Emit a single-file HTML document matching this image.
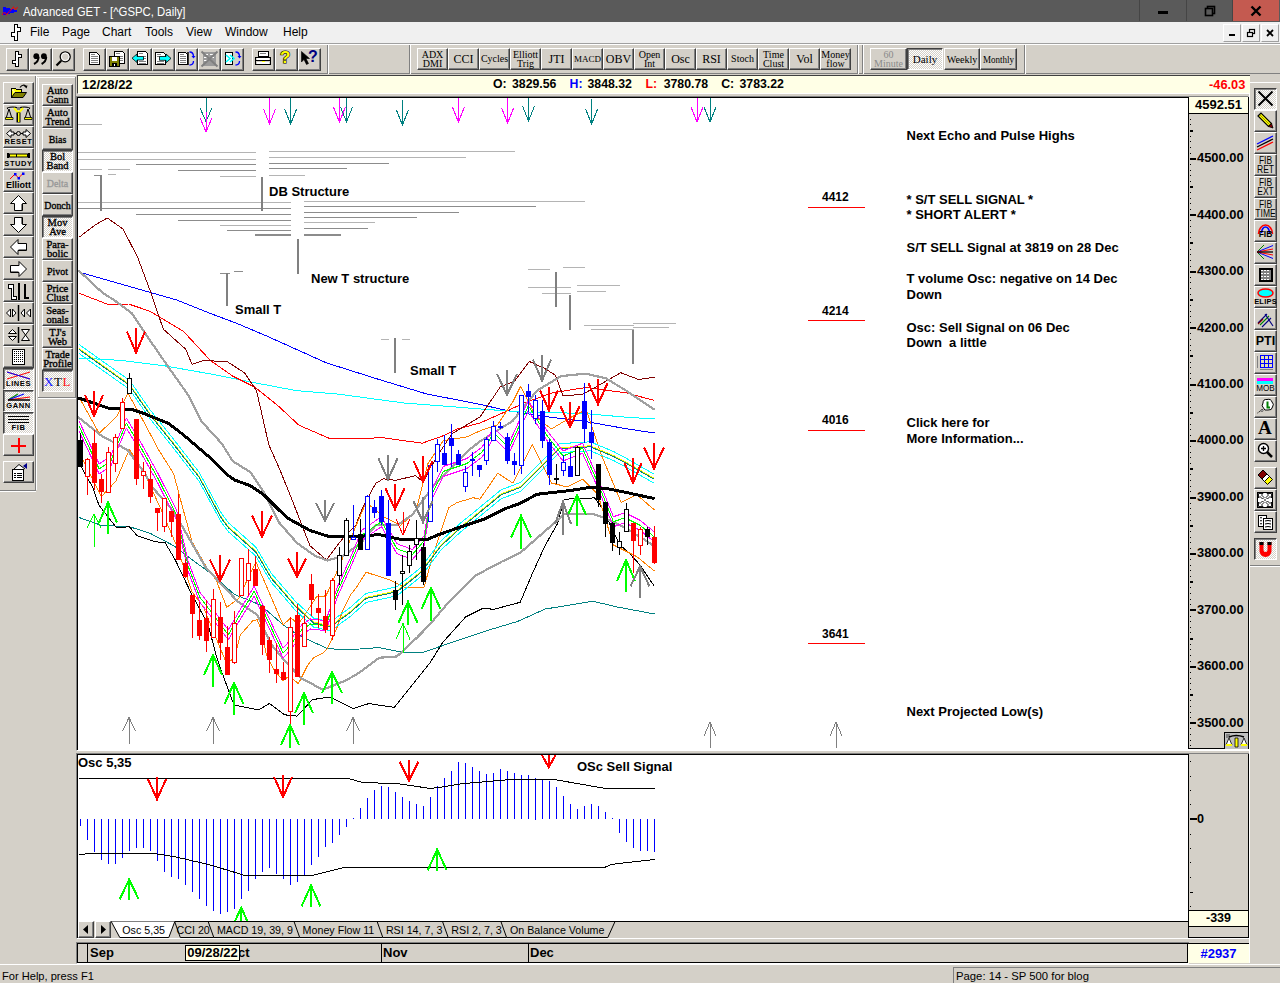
<!DOCTYPE html>
<html><head><meta charset="utf-8"><style>
*{margin:0;padding:0;box-sizing:border-box}
html,body{width:1280px;height:983px;overflow:hidden;background:#d4d0c8;font-family:"Liberation Sans",sans-serif;position:relative}
.a{position:absolute}
.btn{position:absolute;background:#d4d0c8;border:1px solid;border-color:#fff #404040 #404040 #fff;box-shadow:inset -1px -1px #808080}
.dn{border-color:#404040 #fff #fff #404040;box-shadow:inset 1px 1px #808080;background-color:#e8e6e0;background-image:repeating-conic-gradient(#fff 0 25%,#d4d0c8 0 50%);background-size:2px 2px}
.ser{font-family:"Liberation Serif",serif}
.mi{position:absolute;top:4px;font-size:12px}
</style></head><body>
<div class="a" style="left:0;top:0;width:1280px;height:22px;background:#5a5a5a"></div>
<svg class="a" style="left:0px;top:0px" width="20" height="18" viewBox="0 0 20 18"><path d="M3 7 H6 V8 H10 V9 H14 V10 H17 V12 H14 V13 H10 V14 H6 V15 H3 Z" fill="#0000ff"/><path d="M2.3 14.6 L4.5 12.3 L6.5 14.6 L13.5 7.2 L15.5 9.5 L17.6 7.2" stroke="#ff0000" stroke-width="1.3" fill="none" stroke-dasharray="1.2 0.6"/></svg>
<div class="a" style="left:23px;top:4.5px;white-space:nowrap;color:#fff;font-size:12.3px;line-height:14px;transform:scaleX(0.925);transform-origin:0 0">Advanced GET - [^GSPC, Daily]</div>
<div class="a" style="left:1139px;top:0;width:1px;height:21px;background:#454545"></div>
<div class="a" style="left:1186px;top:0;width:1px;height:21px;background:#454545"></div>
<div class="a" style="left:1232px;top:0;width:1px;height:21px;background:#454545"></div>
<div class="a" style="left:1158px;top:11px;width:10px;height:3px;background:#000"></div>
<svg class="a" style="left:1204px;top:5px" width="12" height="12" viewBox="0 0 12 12"><rect x="3.5" y="1.5" width="7" height="7" fill="none" stroke="#000" stroke-width="1.6"/><rect x="1.5" y="3.5" width="7" height="7" fill="#5a5a5a" stroke="#000" stroke-width="1.6"/></svg>
<div class="a" style="left:1233px;top:0;width:46px;height:21px;background:#c45a50"></div>
<svg class="a" style="left:1250px;top:5px" width="12" height="12" viewBox="0 0 12 12"><path d="M1.5 1.5 L10.5 10.5 M10.5 1.5 L1.5 10.5" stroke="#000" stroke-width="2.4"/></svg>
<div class="a" style="left:0;top:22px;width:1280px;height:21px;background:#f0f0f0"></div>
<svg class="a" style="left:9px;top:23px" width="14" height="19" viewBox="0 0 14 19"><path d="M5.5 1.5 H8.5 V4.5 H11.5 V8.5 H8.5 V17.5 H5.5 V13.5 H2.5 V9.5 H5.5 Z" fill="#fff" stroke="#000" stroke-width="1.2" shape-rendering="crispEdges"/></svg>
<div class="mi" style="left:30px;top:25px">File</div>
<div class="mi" style="left:62px;top:25px">Page</div>
<div class="mi" style="left:102px;top:25px">Chart</div>
<div class="mi" style="left:145px;top:25px">Tools</div>
<div class="mi" style="left:186px;top:25px">View</div>
<div class="mi" style="left:225px;top:25px">Window</div>
<div class="mi" style="left:283px;top:25px">Help</div>
<div class="a" style="left:1223px;top:24px;width:18px;height:18px;background:#f0f0f0;border-right:1px solid #a0a0a0;border-bottom:1px solid #a0a0a0;border-left:1px solid #fff;border-top:1px solid #fff"><div class="a" style="left:5px;top:9px;width:6px;height:2px;background:#000"></div></div>
<div class="a" style="left:1242px;top:24px;width:18px;height:18px;background:#f0f0f0;border-right:1px solid #a0a0a0;border-bottom:1px solid #a0a0a0;border-left:1px solid #fff;border-top:1px solid #fff"><svg class="a" style="left:3px;top:3px" width="10" height="10" viewBox="0 0 10 10"><rect x="3.5" y="1.5" width="5" height="4" fill="none" stroke="#000" stroke-width="1.2"/><rect x="1.5" y="4.5" width="5" height="4" fill="#f0f0f0" stroke="#000" stroke-width="1.2"/></svg></div>
<div class="a" style="left:1261px;top:24px;width:18px;height:18px;background:#f0f0f0;border-right:1px solid #a0a0a0;border-bottom:1px solid #a0a0a0;border-left:1px solid #fff;border-top:1px solid #fff"><svg class="a" style="left:3px;top:3px" width="10" height="10" viewBox="0 0 10 10"><path d="M2 2 L8 8 M8 2 L2 8" stroke="#000" stroke-width="1.8"/></svg></div>
<div class="a" style="left:0;top:43px;width:1280px;height:1px;background:#a0a0a0"></div>
<div class="a" style="left:0;top:44px;width:1280px;height:1px;background:#fff"></div>
<div class="btn" style="left:6px;top:48px;width:23px;height:23px;"><svg class="a" style="left:0px;top:0px" width="21" height="21" viewBox="0 0 21 21"><path d="M8.5 2.5 H11.5 V5.5 H14.5 V8.5 H11.5 V17.5 H8.5 V14.5 H5.5 V11.5 H8.5 Z" fill="#fff" stroke="#000" stroke-width="1" shape-rendering="crispEdges"/></svg></div>
<div class="btn" style="left:29px;top:48px;width:23px;height:23px;"><svg class="a" style="left:0px;top:0px" width="21" height="21" viewBox="0 0 21 21"><circle cx="6.3" cy="7.2" r="2.9" fill="#000"/><path d="M8.6 8 Q8.6 12.5 4 15" stroke="#000" stroke-width="2" fill="none"/><circle cx="13.9" cy="7.2" r="2.9" fill="#000"/><path d="M16.2 8 Q16.2 12.5 11.6 15" stroke="#000" stroke-width="2" fill="none"/></svg></div>
<div class="btn" style="left:52px;top:48px;width:23px;height:23px;"><svg class="a" style="left:0px;top:0px" width="21" height="21" viewBox="0 0 21 21"><circle cx="12.2" cy="7.8" r="5" fill="none" stroke="#000" stroke-width="1.3"/><circle cx="12.2" cy="7.8" r="3.8" fill="none" stroke="#fff" stroke-width="1"/><path d="M8.2 11.8 L3.5 16.5" stroke="#000" stroke-width="2.2"/></svg></div>
<div class="btn" style="left:83px;top:48px;width:23px;height:23px;"><svg class="a" style="left:0px;top:0px" width="21" height="21" viewBox="0 0 21 21"><path d="M5.5 3.5 H12.5 L15.5 6.5 V15.5 H5.5 Z" fill="#fff" stroke="#000" shape-rendering="crispEdges"/><path d="M7 5.5 H11 M7 7.5 H14 M7 9.5 H14 M7 11.5 H14 M7 13.5 H14" stroke="#808080" shape-rendering="crispEdges"/><rect x="13" y="4" width="1" height="1" fill="#000"/></svg></div>
<div class="btn" style="left:106px;top:48px;width:23px;height:23px;"><svg class="a" style="left:0px;top:0px" width="21" height="21" viewBox="0 0 21 21"><path d="M7.5 2.5 H15.5 L17.5 4.5 V14.5 H7.5 Z" fill="#fff" stroke="#000" shape-rendering="crispEdges"/><path d="M9 4.5 H13 M11 7.5 H16 M11 9.5 H16 M11 11.5 H16" stroke="#808080" shape-rendering="crispEdges"/><rect x="2.5" y="7.5" width="10" height="10" fill="#808000" stroke="#000" shape-rendering="crispEdges"/><rect x="5" y="8" width="5" height="4" fill="#fff"/><rect x="5" y="14" width="5" height="3" fill="#000"/><rect x="7" y="15" width="1" height="2" fill="#fff"/></svg></div>
<div class="btn" style="left:129px;top:48px;width:23px;height:23px;"><svg class="a" style="left:0px;top:0px" width="21" height="21" viewBox="0 0 21 21"><path d="M7.5 2.5 H15.5 L17.5 4.5 V15.5 H7.5 Z" fill="#fff" stroke="#000" shape-rendering="crispEdges"/><path d="M9 4.5 H13 M13 7.5 H16 M13 9.5 H16 M9 12.5 H16 M9 14 H16" stroke="#808080" shape-rendering="crispEdges"/><path d="M2 9.2 L7 5 V7.5 H13.5 V11 H7 V13.5 Z" fill="#00ffff" stroke="#000" stroke-width="0.8"/></svg></div>
<div class="btn" style="left:152px;top:48px;width:23px;height:23px;"><svg class="a" style="left:0px;top:0px" width="21" height="21" viewBox="0 0 21 21"><path d="M2.5 3.5 H10.5 L12.5 5.5 V15.5 H2.5 Z" fill="#fff" stroke="#000" shape-rendering="crispEdges"/><path d="M4 5.5 H8 M4 7.5 H7 M4 12.5 H11 M4 14 H11" stroke="#808080" shape-rendering="crispEdges"/><path d="M18 9.4 L13 5 V7.5 H6.5 V11.3 H13 V13.8 Z" fill="#00ffff" stroke="#000" stroke-width="0.8"/></svg></div>
<div class="btn" style="left:175px;top:48px;width:23px;height:23px;"><svg class="a" style="left:0px;top:0px" width="21" height="21" viewBox="0 0 21 21"><path d="M2.5 3.5 H9.5 L11.5 5.5 V15.5 H2.5 Z" fill="#fff" stroke="#000" shape-rendering="crispEdges"/><path d="M4 5.5 H8 M4 7.5 H10 M4 9.5 H10 M4 11.5 H10 M4 13.5 H10" stroke="#808080" shape-rendering="crispEdges"/><path d="M12 3 V16" stroke="#000" stroke-width="1.5"/><path d="M13.5 3 Q17.5 3 17.5 7.5 M13.5 16 Q17.5 16 17.5 12" fill="none" stroke="#0000ff" stroke-width="1.3"/><path d="M15.5 7 L17.5 9.5 L19.5 7 Z" fill="#0000ff"/></svg></div>
<div class="btn" style="left:198px;top:48px;width:23px;height:23px;"><svg class="a" style="left:0px;top:0px" width="21" height="21" viewBox="0 0 21 21"><rect x="4" y="3" width="13" height="14" fill="#9a9a9a"/><path d="M5 5 H9 M5 8 H9 M5 11 H9 M11 5 H15 M11 8 H15" stroke="#fff" shape-rendering="crispEdges"/><path d="M2.5 2.5 L18.5 17.5 M18.5 2.5 L2.5 17.5" stroke="#808080" stroke-width="2"/></svg></div>
<div class="btn" style="left:221px;top:48px;width:23px;height:23px;"><svg class="a" style="left:0px;top:0px" width="21" height="21" viewBox="0 0 21 21"><path d="M3.5 3.5 H10.5 V15.5 H3.5 Z" fill="#fff" stroke="#000" shape-rendering="crispEdges"/><path d="M4 6 L8 9.5 L4 13 M8 6 L12 9.5 L8 13" stroke="#00ffff" stroke-width="1.6" fill="none"/><path d="M13.5 3 Q17.5 3 17.5 7.5 M13.5 16 Q17.5 16 17.5 12" fill="none" stroke="#0000ff" stroke-width="1.3"/><path d="M15.5 7 L17.5 9.5 L19.5 7 Z" fill="#0000ff"/></svg></div>
<div class="btn" style="left:252px;top:48px;width:23px;height:23px;"><svg class="a" style="left:0px;top:0px" width="21" height="21" viewBox="0 0 21 21"><path d="M5.5 2.5 H15.5 V7.5 H5.5 Z" fill="#fff" stroke="#000" shape-rendering="crispEdges"/><path d="M7 4.5 H13" stroke="#808080" shape-rendering="crispEdges"/><path d="M2.5 8.5 H17.5 V15.5 H2.5 Z" fill="#d4d0c8" stroke="#000" shape-rendering="crispEdges"/><path d="M3 11.5 H17" stroke="#000" shape-rendering="crispEdges"/><rect x="4" y="9" width="12" height="2" fill="#fff"/><rect x="4" y="13" width="12" height="2" fill="#fff"/><rect x="9" y="12" width="3" height="1" fill="#ff0"/></svg></div>
<div class="btn" style="left:275px;top:48px;width:23px;height:23px;"><div class="a" style="left:4px;top:-1px;font-size:17px;line-height:19px;font-weight:bold;color:#ffff00;-webkit-text-stroke:1.2px #000;paint-order:stroke fill">?</div></div>
<div class="btn" style="left:298px;top:48px;width:23px;height:23px;"><svg class="a" style="left:0px;top:0px" width="21" height="21" viewBox="0 0 21 21"><path d="M2.5 2.5 V13 L5 10.5 L7.5 15.5 L9.5 14.5 L7 9.5 H10.5 Z" fill="#000" stroke="#000" stroke-width="0.6"/></svg><div class="a" style="left:9px;top:-1px;font-size:16px;line-height:18px;font-weight:bold;color:#000080">?</div></div>
<div class="a" style="left:0;top:73px;width:1280px;height:1px;background:#808080"></div>
<div class="a" style="left:327px;top:45px;width:1px;height:29px;background:#808080"></div><div class="a" style="left:328px;top:45px;width:1px;height:29px;background:#fff"></div>
<div class="a" style="left:409px;top:45px;width:1px;height:29px;background:#808080"></div><div class="a" style="left:410px;top:45px;width:1px;height:29px;background:#fff"></div>
<div class="a" style="left:857px;top:45px;width:1px;height:29px;background:#808080"></div><div class="a" style="left:858px;top:45px;width:1px;height:29px;background:#fff"></div>
<div class="a" style="left:862px;top:45px;width:1px;height:29px;background:#808080"></div><div class="a" style="left:863px;top:45px;width:1px;height:29px;background:#fff"></div>
<div class="a" style="left:1024px;top:45px;width:1px;height:29px;background:#808080"></div><div class="a" style="left:1025px;top:45px;width:1px;height:29px;background:#fff"></div>
<div class="btn" style="left:417px;top:48px;width:31px;height:22px;"><div class="a ser" style="left:0;right:0;top:1px;text-align:center;font-size:10px;line-height:9px;color:#000;letter-spacing:0;font-weight:normal">ADX<br>DMI</div></div>
<div class="btn" style="left:448px;top:48px;width:31px;height:22px;"><div class="a ser" style="left:0;right:0;top:4px;text-align:center;font-size:12px;line-height:12px;color:#000;letter-spacing:0;font-weight:normal">CCI</div></div>
<div class="btn" style="left:479px;top:48px;width:31px;height:22px;"><div class="a ser" style="left:0;right:0;top:5px;text-align:center;font-size:10px;line-height:10px;color:#000;letter-spacing:0;font-weight:normal">Cycles</div></div>
<div class="btn" style="left:510px;top:48px;width:31px;height:22px;"><div class="a ser" style="left:0;right:0;top:1px;text-align:center;font-size:10px;line-height:9px;color:#000;letter-spacing:0;font-weight:normal">Elliott<br>Trig</div></div>
<div class="btn" style="left:541px;top:48px;width:31px;height:22px;"><div class="a ser" style="left:0;right:0;top:4px;text-align:center;font-size:12px;line-height:12px;color:#000;letter-spacing:0;font-weight:normal">JTI</div></div>
<div class="btn" style="left:572px;top:48px;width:31px;height:22px;"><div class="a ser" style="left:0;right:0;top:6px;text-align:center;font-size:9px;line-height:9px;color:#000;letter-spacing:0;font-weight:normal">MACD</div></div>
<div class="btn" style="left:603px;top:48px;width:31px;height:22px;"><div class="a ser" style="left:0;right:0;top:4px;text-align:center;font-size:12px;line-height:12px;color:#000;letter-spacing:0;font-weight:normal">OBV</div></div>
<div class="btn" style="left:634px;top:48px;width:31px;height:22px;"><div class="a ser" style="left:0;right:0;top:1px;text-align:center;font-size:10px;line-height:9px;color:#000;letter-spacing:0;font-weight:normal">Open<br>Int</div></div>
<div class="btn" style="left:665px;top:48px;width:31px;height:22px;"><div class="a ser" style="left:0;right:0;top:4px;text-align:center;font-size:12px;line-height:12px;color:#000;letter-spacing:0;font-weight:normal">Osc</div></div>
<div class="btn" style="left:696px;top:48px;width:31px;height:22px;"><div class="a ser" style="left:0;right:0;top:4px;text-align:center;font-size:12px;line-height:12px;color:#000;letter-spacing:0;font-weight:normal">RSI</div></div>
<div class="btn" style="left:727px;top:48px;width:31px;height:22px;"><div class="a ser" style="left:0;right:0;top:5px;text-align:center;font-size:10px;line-height:10px;color:#000;letter-spacing:0;font-weight:normal">Stoch</div></div>
<div class="btn" style="left:758px;top:48px;width:31px;height:22px;"><div class="a ser" style="left:0;right:0;top:1px;text-align:center;font-size:10px;line-height:9px;color:#000;letter-spacing:0;font-weight:normal">Time<br>Clust</div></div>
<div class="btn" style="left:789px;top:48px;width:31px;height:22px;"><div class="a ser" style="left:0;right:0;top:4px;text-align:center;font-size:12px;line-height:12px;color:#000;letter-spacing:0;font-weight:normal">Vol</div></div>
<div class="btn" style="left:820px;top:48px;width:31px;height:22px;"><div class="a ser" style="left:0;right:0;top:1px;text-align:center;font-size:10px;line-height:9px;color:#000;letter-spacing:0;font-weight:normal">Money<br>flow</div></div>
<div class="btn" style="left:870px;top:48px;width:37px;height:22px;"><div class="a ser" style="left:0;right:0;top:1px;text-align:center;font-size:10px;line-height:9px;color:#8a8a8a;letter-spacing:0;font-weight:normal">60<br>Minute</div></div>
<div class="btn dn" style="left:907px;top:48px;width:36px;height:22px;"><div class="a ser" style="left:0;right:0;top:5px;text-align:center;font-size:11px;line-height:11px;color:#000;letter-spacing:0;font-weight:normal">Daily</div></div>
<div class="btn" style="left:944px;top:48px;width:36px;height:22px;"><div class="a" style="left:-4px;right:-4px;top:0;transform:scaleX(0.92)"><div class="a ser" style="left:0;right:0;top:5px;text-align:center;font-size:11px;line-height:11px;color:#000;letter-spacing:0;font-weight:normal">Weekly</div></div></div>
<div class="btn" style="left:980px;top:48px;width:37px;height:22px;"><div class="a" style="left:-4px;right:-4px;top:0;transform:scaleX(0.82)"><div class="a ser" style="left:0;right:0;top:5px;text-align:center;font-size:11px;line-height:11px;color:#000;letter-spacing:0;font-weight:normal">Monthly</div></div></div>
<div class="a" style="left:0;top:75px;width:76px;height:1px;background:#fff"></div>
<div class="a" style="left:35px;top:76px;width:1px;height:414px;background:#808080"></div>
<div class="a" style="left:36px;top:76px;width:1px;height:414px;background:#fff"></div>
<div class="a" style="left:0;top:490px;width:36px;height:1px;background:#808080"></div>
<div class="a" style="left:0;top:491px;width:36px;height:1px;background:#fff"></div>
<div class="a" style="left:37px;top:77px;width:39px;height:1px;background:#fff"></div>
<div class="a" style="left:38px;top:77px;width:1px;height:321px;background:#fff"></div>
<div class="a" style="left:75px;top:77px;width:1px;height:321px;background:#808080"></div>
<div class="a" style="left:38px;top:397px;width:38px;height:1px;background:#808080"></div>
<div class="a" style="left:38px;top:398px;width:38px;height:1px;background:#fff"></div>
<div class="btn" style="left:3px;top:82px;width:31px;height:22px;"><svg class="a" style="left:0px;top:0px" width="29" height="20" viewBox="0 0 29 20"><path d="M7.5 5.5 H11.5 L12.5 6.5 H17.5 V14.5 H7.5 Z" fill="#ffff00" stroke="#000" shape-rendering="crispEdges"/><path d="M8 7 L10 7 M9 9 L11 9" stroke="#fff"/><path d="M7.5 14.5 L11 9.5 H22.5 L19 14.5 Z" fill="#808000" stroke="#000" stroke-width="1"/><path d="M16 4.5 Q19 0.5 22 3.5" fill="none" stroke="#000" stroke-width="1.2"/><path d="M20 3 L22.5 5.5 L23.5 2.5 Z" fill="#000"/></svg></div>
<div class="btn" style="left:3px;top:104px;width:31px;height:22px;"><svg class="a" style="left:0px;top:0px" width="29" height="20" viewBox="0 0 29 20"><path d="M3 3.5 Q9 1 14.5 3.5 Q20 1 26 3.5" stroke="#000" fill="none" stroke-width="1.6"/><path d="M4 3.5 Q9 2 14.5 4.5 Q20 2 25 3.5" stroke="#fff" fill="none" stroke-width="0.8"/><path d="M10 3 L14.5 8 L19 3" stroke="#ff0" stroke-width="2" fill="none"/><rect x="13" y="2" width="3" height="3" fill="#808080"/><rect x="12.5" y="7.5" width="4" height="10" fill="#000"/><rect x="14" y="8" width="1.5" height="9" fill="#ff0"/><path d="M2 13.5 L5 4 L8 13.5 M21 13.5 L24 4 L27 13.5" fill="none" stroke="#000"/><path d="M1.5 12.5 H9 V14.5 H1.5 Z M20.5 12.5 H28 V14.5 H20.5 Z" fill="#ff0" stroke="#000" stroke-width="0.8"/></svg></div>
<div class="btn" style="left:3px;top:126px;width:31px;height:22px;"><svg class="a" style="left:0px;top:0px" width="29" height="20" viewBox="0 0 29 20"><path d="M2.5 6.5 L7 2.5 V5 H10 V8 H7 V10.5 Z M26.5 6.5 L22 2.5 V5 H19 V8 H22 V10.5 Z" fill="#fff" stroke="#000" stroke-width="1"/><circle cx="14.5" cy="6.5" r="2" fill="#d4d0c8" stroke="#000"/><path d="M10 6.5 H12.5 M16.5 6.5 H19" stroke="#000"/></svg><div class="a" style="left:-1px;right:-1px;top:11px;text-align:center;font-size:7.5px;font-weight:bold;line-height:7.5px;letter-spacing:0.6px;color:#000">RESET</div></div>
<div class="btn" style="left:3px;top:148px;width:31px;height:22px;"><svg class="a" style="left:0px;top:0px" width="29" height="20" viewBox="0 0 29 20"><rect x="3" y="4" width="2" height="5" fill="#000"/><rect x="24" y="4" width="2" height="5" fill="#000"/><rect x="5" y="4.5" width="19" height="4" fill="#000"/><rect x="6" y="5.5" width="6" height="2" fill="#ff0"/><rect x="13" y="5.5" width="10" height="2" fill="#ff0"/></svg><div class="a" style="left:-1px;right:-1px;top:11px;text-align:center;font-size:7.5px;font-weight:bold;line-height:7.5px;letter-spacing:0.6px;color:#000">STUDY</div></div>
<div class="btn" style="left:3px;top:170px;width:31px;height:22px;"><svg class="a" style="left:0px;top:0px" width="29" height="20" viewBox="0 0 29 20"><path d="M6 8 L11 3 L14.5 7 L19 2.5" stroke="#f00" fill="none"/><rect x="10" y="2" width="2.5" height="2.5" fill="#00f"/><rect x="13.5" y="6" width="2.5" height="2.5" fill="#00f"/><rect x="18" y="1.5" width="2.5" height="2.5" fill="#00f"/></svg><div class="a" style="left:-1px;right:-1px;top:10px;text-align:center;font-size:9px;font-weight:bold;line-height:9px;letter-spacing:0px;color:#000">Elliott</div></div>
<div class="btn" style="left:3px;top:192px;width:31px;height:22px;"><svg class="a" style="left:0px;top:0px" width="29" height="20" viewBox="0 0 29 20"><path d="M14.5 2.5 L22.5 10.5 H18.5 V17.5 H10.5 V10.5 H6.5 Z" fill="#fff" stroke="#000" stroke-width="1"/><path d="M17.5 11 V17" stroke="#808080"/></svg></div>
<div class="btn" style="left:3px;top:214px;width:31px;height:22px;"><svg class="a" style="left:0px;top:0px" width="29" height="20" viewBox="0 0 29 20"><path d="M14.5 17.5 L22.5 9.5 H18.5 V2.5 H10.5 V9.5 H6.5 Z" fill="#fff" stroke="#000" stroke-width="1"/><path d="M17.5 3 V9" stroke="#808080"/></svg></div>
<div class="btn" style="left:3px;top:236px;width:31px;height:22px;"><svg class="a" style="left:0px;top:0px" width="29" height="20" viewBox="0 0 29 20"><path d="M6.5 10 L14 2.5 V6.5 H22.5 V13.5 H14 V17.5 Z" fill="#fff" stroke="#000" stroke-width="1"/><path d="M14.5 12.5 H22" stroke="#808080"/></svg></div>
<div class="btn" style="left:3px;top:258px;width:31px;height:22px;"><svg class="a" style="left:0px;top:0px" width="29" height="20" viewBox="0 0 29 20"><path d="M22.5 10 L15 2.5 V6.5 H6.5 V13.5 H15 V17.5 Z" fill="#fff" stroke="#000" stroke-width="1"/><path d="M7 12.5 H14.5" stroke="#808080"/></svg></div>
<div class="btn" style="left:3px;top:280px;width:31px;height:22px;"><svg class="a" style="left:0px;top:0px" width="29" height="20" viewBox="0 0 29 20"><path d="M4.5 3.5 H9.5 V15.5 H12.5 V18.5 H7.5 V7.5 H4.5 Z" fill="#fff" stroke="#000" shape-rendering="crispEdges"/><path d="M15 2 V19" stroke="#000" stroke-width="1.5" shape-rendering="crispEdges"/><path d="M20.5 3 V16.5 H24.5" fill="none" stroke="#000" stroke-width="2" shape-rendering="crispEdges"/></svg></div>
<div class="btn" style="left:3px;top:302px;width:31px;height:22px;"><svg class="a" style="left:0px;top:0px" width="29" height="20" viewBox="0 0 29 20"><path d="M2.5 10 L6.5 6 V14 Z M8.5 6 L12 10 L8.5 14 Z M20.5 6 L17 10 L20.5 14 Z M26.5 6 L22.5 10 L26.5 14 Z" fill="#fff" stroke="#000" stroke-width="1"/><path d="M14.5 2 V18" stroke="#000" stroke-width="1.5"/></svg></div>
<div class="btn" style="left:3px;top:324px;width:31px;height:22px;"><svg class="a" style="left:0px;top:0px" width="29" height="20" viewBox="0 0 29 20"><path d="M4.5 8.5 L8.5 4.5 L12.5 8.5 Z M4.5 11.5 L8.5 15.5 L12.5 11.5 Z" fill="#fff" stroke="#000"/><path d="M14.5 2 V18" stroke="#000" stroke-width="1.5"/><path d="M17.5 4.5 H25.5 L17.5 15.5 H25.5 Z" fill="#fff" stroke="#000"/></svg></div>
<div class="btn" style="left:3px;top:346px;width:31px;height:22px;"><svg class="a" style="left:0px;top:0px" width="29" height="20" viewBox="0 0 29 20"><rect x="8.5" y="2.5" width="12" height="15" fill="#fff" stroke="#000" stroke-width="1.5" shape-rendering="crispEdges"/><rect x="10" y="4" width="9" height="12" fill="url(#dp)"/><defs><pattern id="dp" width="2" height="2" patternUnits="userSpaceOnUse"><rect width="1" height="1" fill="#000"/></pattern></defs></svg></div>
<div class="btn dn" style="left:3px;top:368px;width:31px;height:22px;"><svg class="a" style="left:0px;top:0px" width="29" height="20" viewBox="0 0 29 20"><path d="M3 3 L26 10 M3 10 L26 3" stroke="#f00"/><path d="M3 3 L26 10" stroke="#00f"/></svg><div class="a" style="left:-1px;right:-1px;top:11px;text-align:center;font-size:7.5px;font-weight:bold;line-height:7.5px;letter-spacing:0.6px;color:#000">LINES</div></div>
<div class="btn dn" style="left:3px;top:390px;width:31px;height:22px;"><svg class="a" style="left:0px;top:0px" width="29" height="20" viewBox="0 0 29 20"><path d="M4 9 L14 3" stroke="#080" stroke-width="1.2"/><path d="M4 9 L20 3" stroke="#00f" stroke-width="1.2"/><path d="M4 9 L26 6" stroke="#f00" stroke-width="1.2"/><path d="M4 9 H26" stroke="#000" stroke-width="1.5"/></svg><div class="a" style="left:-1px;right:-1px;top:11px;text-align:center;font-size:7.5px;font-weight:bold;line-height:7.5px;letter-spacing:0.6px;color:#000">GANN</div></div>
<div class="btn dn" style="left:3px;top:412px;width:31px;height:22px;"><svg class="a" style="left:0px;top:0px" width="29" height="20" viewBox="0 0 29 20"><path d="M4 3.5 H25 M4 6.5 H25 M4 9.5 H25" stroke="#000" shape-rendering="crispEdges"/></svg><div class="a" style="left:-1px;right:-1px;top:11px;text-align:center;font-size:7.5px;font-weight:bold;line-height:7.5px;letter-spacing:0.6px;color:#000">FIB</div></div>
<div class="btn" style="left:3px;top:434px;width:31px;height:22px;"><svg class="a" style="left:0px;top:0px" width="29" height="20" viewBox="0 0 29 20"><path d="M14.5 3 V18 M7 10.5 H22" stroke="#f00" stroke-width="2" shape-rendering="crispEdges"/></svg></div>
<div class="btn" style="left:3px;top:461px;width:31px;height:22px;"><svg class="a" style="left:0px;top:0px" width="29" height="20" viewBox="0 0 29 20"><path d="M8.5 7.5 H19.5 V18.5 H8.5 Z" fill="#fff" stroke="#000" shape-rendering="crispEdges"/><path d="M10 11.5 H12 M13 11.5 H18 M10 13.5 H12 M13 13.5 H18 M10 15.5 H12 M13 15.5 H18" stroke="#000" shape-rendering="crispEdges"/><path d="M10 7 L15 2.5 L21 7" fill="#fff" stroke="#000"/><path d="M19 4 L23 1 V7 Z" fill="#00008b"/></svg></div>
<div class="btn" style="left:42px;top:84px;width:31px;height:22px;"><div class="a" style="left:0;right:0;top:0;-webkit-text-stroke:0.35px #000"><div class="a ser" style="left:0;right:0;top:1px;text-align:center;font-size:10.5px;line-height:9px;color:#000;letter-spacing:0;font-weight:normal">Auto<br>Gann</div></div></div>
<div class="btn" style="left:42px;top:106px;width:31px;height:22px;"><div class="a" style="left:0;right:0;top:0;-webkit-text-stroke:0.35px #000"><div class="a ser" style="left:0;right:0;top:1px;text-align:center;font-size:10.5px;line-height:9px;color:#000;letter-spacing:0;font-weight:normal">Auto<br>Trend</div></div></div>
<div class="btn" style="left:42px;top:128px;width:31px;height:22px;"><div class="a" style="left:-4px;right:-4px;top:5px;transform:scaleX(0.9);-webkit-text-stroke:0.35px #000"><div class="a ser" style="left:0;right:0;top:0px;text-align:center;font-size:11px;line-height:11px;color:#000;letter-spacing:0;font-weight:normal">Bias</div></div></div>
<div class="btn dn" style="left:42px;top:150px;width:31px;height:22px;"><div class="a" style="left:0;right:0;top:0;-webkit-text-stroke:0.35px #000"><div class="a ser" style="left:0;right:0;top:1px;text-align:center;font-size:10.5px;line-height:9px;color:#000;letter-spacing:0;font-weight:normal">Bol<br>Band</div></div></div>
<div class="btn" style="left:42px;top:172px;width:31px;height:22px;"><div class="a" style="left:-4px;right:-4px;top:5px;transform:scaleX(0.9);-webkit-text-stroke:0.35px #999"><div class="a ser" style="left:0;right:0;top:0px;text-align:center;font-size:11px;line-height:11px;color:#999;letter-spacing:0;font-weight:normal">Delta</div></div></div>
<div class="btn" style="left:42px;top:194px;width:31px;height:22px;"><div class="a" style="left:-4px;right:-4px;top:5px;transform:scaleX(0.9);-webkit-text-stroke:0.35px #000"><div class="a ser" style="left:0;right:0;top:0px;text-align:center;font-size:11px;line-height:11px;color:#000;letter-spacing:0;font-weight:normal">Donch</div></div></div>
<div class="btn dn" style="left:42px;top:216px;width:31px;height:22px;"><div class="a" style="left:0;right:0;top:0;-webkit-text-stroke:0.35px #000"><div class="a ser" style="left:0;right:0;top:1px;text-align:center;font-size:10.5px;line-height:9px;color:#000;letter-spacing:0;font-weight:normal">Mov<br>Ave</div></div></div>
<div class="btn" style="left:42px;top:238px;width:31px;height:22px;"><div class="a" style="left:0;right:0;top:0;-webkit-text-stroke:0.35px #000"><div class="a ser" style="left:0;right:0;top:1px;text-align:center;font-size:10.5px;line-height:9px;color:#000;letter-spacing:0;font-weight:normal">Para-<br>bolic</div></div></div>
<div class="btn" style="left:42px;top:260px;width:31px;height:22px;"><div class="a" style="left:-4px;right:-4px;top:5px;transform:scaleX(0.9);-webkit-text-stroke:0.35px #000"><div class="a ser" style="left:0;right:0;top:0px;text-align:center;font-size:11px;line-height:11px;color:#000;letter-spacing:0;font-weight:normal">Pivot</div></div></div>
<div class="btn" style="left:42px;top:282px;width:31px;height:22px;"><div class="a" style="left:0;right:0;top:0;-webkit-text-stroke:0.35px #000"><div class="a ser" style="left:0;right:0;top:1px;text-align:center;font-size:10.5px;line-height:9px;color:#000;letter-spacing:0;font-weight:normal">Price<br>Clust</div></div></div>
<div class="btn" style="left:42px;top:304px;width:31px;height:22px;"><div class="a" style="left:0;right:0;top:0;-webkit-text-stroke:0.35px #000"><div class="a ser" style="left:0;right:0;top:1px;text-align:center;font-size:10.5px;line-height:9px;color:#000;letter-spacing:0;font-weight:normal">Seas-<br>onals</div></div></div>
<div class="btn" style="left:42px;top:326px;width:31px;height:22px;"><div class="a" style="left:0;right:0;top:0;-webkit-text-stroke:0.35px #000"><div class="a ser" style="left:0;right:0;top:1px;text-align:center;font-size:10.5px;line-height:9px;color:#000;letter-spacing:0;font-weight:normal">TJ's<br>Web</div></div></div>
<div class="btn" style="left:42px;top:348px;width:31px;height:22px;"><div class="a" style="left:0;right:0;top:0;-webkit-text-stroke:0.35px #000"><div class="a ser" style="left:0;right:0;top:1px;text-align:center;font-size:10.5px;line-height:9px;color:#000;letter-spacing:0;font-weight:normal">Trade<br>Profile</div></div></div>
<div class="btn dn" style="left:42px;top:370px;width:31px;height:22px;"><div class="a ser" style="left:0;right:0;top:4px;text-align:center;font-size:13px;line-height:13px;letter-spacing:0.5px"><span style="color:#1010ff">X</span>T<span style="color:#ff1010">L</span></div></div>
<div class="a" style="left:1249px;top:75px;width:1px;height:888px;background:#fff"></div>
<div class="a" style="left:1250px;top:82px;width:30px;height:1px;background:#fff"></div>
<div class="btn dn" style="left:1254px;top:88px;width:23px;height:22px;"><svg class="a" style="left:0px;top:0px" width="21" height="20" viewBox="0 0 21 20"><path d="M3.5 2.5 L17.5 16.5 M17.5 2.5 L3.5 16.5" stroke="#000" stroke-width="2"/></svg></div>
<div class="btn" style="left:1254px;top:110px;width:23px;height:22px;"><svg class="a" style="left:0px;top:0px" width="21" height="20" viewBox="0 0 21 20"><path d="M3 5 L6 2 L16.5 12.5 L13.5 15.5 Z" fill="#ffff00" stroke="#000" stroke-width="1.2"/><path d="M5 4 L15 14" stroke="#808000" stroke-width="0.8"/><path d="M13.5 15.5 L16.5 12.5 L18 17 Z" fill="#800000" stroke="#000" stroke-width="0.8"/></svg></div>
<div class="btn" style="left:1254px;top:132px;width:23px;height:22px;"><svg class="a" style="left:0px;top:0px" width="21" height="20" viewBox="0 0 21 20"><path d="M2 11 L18 3" stroke="#0000ff" stroke-width="1.2"/><path d="M2 14 L18 6" stroke="#000" stroke-width="1.2"/><path d="M2 17 L18 9" stroke="#ff0000" stroke-width="1.2"/></svg></div>
<div class="btn" style="left:1254px;top:154px;width:23px;height:22px;"><div class="a" style="left:-2px;right:-2px;top:1px;text-align:center;font-size:10px;line-height:9px;font-weight:normal;transform:scaleX(0.85)">FIB<br>RET</div></div>
<div class="btn" style="left:1254px;top:176px;width:23px;height:22px;"><div class="a" style="left:-2px;right:-2px;top:1px;text-align:center;font-size:10px;line-height:9px;font-weight:normal;transform:scaleX(0.85)">FIB<br>EXT</div></div>
<div class="btn" style="left:1254px;top:198px;width:23px;height:22px;"><div class="a" style="left:-2px;right:-2px;top:1px;text-align:center;font-size:10px;line-height:9px;font-weight:normal;transform:scaleX(0.85)">FIB<br>TIME</div></div>
<div class="btn" style="left:1254px;top:220px;width:23px;height:22px;"><svg class="a" style="left:0px;top:0px" width="21" height="20" viewBox="0 0 21 20"><path d="M3.5 13 A7 9 0 0 1 17.5 13" fill="none" stroke="#ff0000" stroke-width="1.6"/><path d="M6.5 12 A4 6 0 0 1 14.5 12" fill="none" stroke="#0000ff" stroke-width="1.6"/></svg><div class="a" style="left:0;right:0;top:9px;text-align:center;font-size:8.5px;line-height:8px;font-weight:bold">FIB</div></div>
<div class="btn" style="left:1254px;top:242px;width:23px;height:22px;"><svg class="a" style="left:0px;top:0px" width="21" height="20" viewBox="0 0 21 20"><path d="M2 9 L9 2 M2 9 L9 16" stroke="#008000"/><path d="M2 9 L18 2.5 M2 9 L18 15.5" stroke="#0000ff"/><path d="M2 9 L18 6 M2 9 L18 12" stroke="#ff0000"/><path d="M2 9 H18" stroke="#000" stroke-width="1.3"/></svg></div>
<div class="btn" style="left:1254px;top:264px;width:23px;height:22px;"><svg class="a" style="left:0px;top:0px" width="21" height="20" viewBox="0 0 21 20"><rect x="4.5" y="3.5" width="12" height="12" fill="#808080" stroke="#000" stroke-width="2" shape-rendering="crispEdges"/><path d="M6 5.5 H15 M6 8.5 H15 M6 11.5 H15 M6 14 H15" stroke="#fff" stroke-dasharray="1.5 1.5" shape-rendering="crispEdges"/></svg></div>
<div class="btn" style="left:1254px;top:286px;width:23px;height:22px;"><svg class="a" style="left:0px;top:0px" width="21" height="20" viewBox="0 0 21 20"><ellipse cx="10.5" cy="6" rx="7.5" ry="4" fill="#00ffff" stroke="#ff0000" stroke-width="1.5"/></svg><div class="a" style="left:-2px;right:-2px;top:11px;text-align:center;font-size:7.5px;line-height:7px;font-weight:bold;letter-spacing:0.2px">ELIPS</div></div>
<div class="btn" style="left:1254px;top:308px;width:23px;height:22px;"><svg class="a" style="left:0px;top:0px" width="21" height="20" viewBox="0 0 21 20"><path d="M3 14 L12 5" stroke="#000080" stroke-width="1.1"/><path d="M5 16 L14 7" stroke="#008000" stroke-width="1.1"/><path d="M7 18 L16 9" stroke="#000080" stroke-width="1.1"/><path d="M3 15 L8 10" stroke="#800000" stroke-width="1.1"/><path d="M10 5 L18 17" stroke="#000080" stroke-width="1.1"/></svg></div>
<div class="btn" style="left:1254px;top:330px;width:23px;height:22px;"><div class="a" style="left:-2px;right:-2px;top:4px;text-align:center;font-size:12.5px;line-height:12px;font-weight:bold">PTI</div></div>
<div class="btn" style="left:1254px;top:352px;width:23px;height:22px;"><svg class="a" style="left:0px;top:0px" width="21" height="20" viewBox="0 0 21 20"><path d="M2.5 3 V15" stroke="#808080" shape-rendering="crispEdges"/><rect x="5.5" y="2.5" width="12" height="12" fill="#e8e0b0" stroke="#0000ff" stroke-width="1.5" shape-rendering="crispEdges"/><path d="M9.5 2.5 V14.5 M13.5 2.5 V14.5 M5.5 6.5 H17.5 M5.5 10.5 H17.5" stroke="#0000ff" stroke-width="1.2" shape-rendering="crispEdges"/><path d="M5 16.5 H18" stroke="#808080" shape-rendering="crispEdges"/></svg></div>
<div class="btn" style="left:1254px;top:374px;width:23px;height:22px;"><svg class="a" style="left:0px;top:0px" width="21" height="20" viewBox="0 0 21 20"><rect x="2" y="3" width="16" height="3" fill="#ff00ff"/><rect x="2" y="6" width="16" height="3" fill="#00ffff"/></svg><div class="a" style="left:-2px;right:-2px;top:9px;text-align:center;font-size:9px;line-height:9px;transform:scaleX(0.9)">MOB</div></div>
<div class="btn" style="left:1254px;top:396px;width:23px;height:22px;"><svg class="a" style="left:0px;top:0px" width="21" height="20" viewBox="0 0 21 20"><path d="M8 6 Q8 2 12 2.5 Q16 1.5 17 5 Q19.5 7 17.5 10 Q17 13.5 13 13 Q9 14 8.5 11 Q6 9 8 6 Z" fill="#fff" stroke="#000"/><path d="M11.5 4.5 H13.5 V9.5 H15 V11.5 H11.5 Z" fill="#008000"/><path d="M7.5 12.5 L2.5 16" stroke="#000" stroke-dasharray="1.5 1"/><circle cx="7" cy="13.5" r="1" fill="#fff" stroke="#000" stroke-width="0.6"/></svg></div>
<div class="btn" style="left:1254px;top:418px;width:23px;height:22px;"><div class="a ser" style="left:3px;top:-1px;font-size:19px;line-height:20px;font-weight:bold">A</div></div>
<div class="btn" style="left:1254px;top:440px;width:23px;height:22px;"><svg class="a" style="left:0px;top:0px" width="21" height="20" viewBox="0 0 21 20"><circle cx="8.5" cy="7.5" r="5" fill="#fff" stroke="#000" stroke-width="1.4"/><path d="M6 7.5 H11 M8.5 5 V10" stroke="#000" stroke-width="1.3"/><path d="M12 11 L17 16" stroke="#000" stroke-width="2.5"/></svg></div>
<div class="btn" style="left:1254px;top:467px;width:23px;height:22px;"><svg class="a" style="left:0px;top:0px" width="21" height="20" viewBox="0 0 21 20"><path d="M3 7 L8 2 L12 6 L7 11 Z" fill="#800000" stroke="#000"/><path d="M7 11 L12 6 L14.5 8.5 L9.5 13.5 Z" fill="#fff" stroke="#000"/><path d="M9.5 13.5 L14.5 8.5 L17.5 11.5 L12.5 16.5 Z" fill="#ffff00" stroke="#000"/></svg></div>
<div class="btn" style="left:1254px;top:489px;width:23px;height:22px;"><svg class="a" style="left:0px;top:0px" width="21" height="20" viewBox="0 0 21 20"><rect x="2.5" y="2.5" width="15" height="15" fill="#fff" stroke="#000" shape-rendering="crispEdges"/><path d="M3.5 3.5 L8 3.5 L6.5 5 L9 7.5 L7.5 9 L5 6.5 L3.5 8 Z M16.5 3.5 L12 3.5 L13.5 5 L11 7.5 L12.5 9 L15 6.5 L16.5 8 Z M3.5 16.5 L8 16.5 L6.5 15 L9 12.5 L7.5 11 L5 13.5 L3.5 12 Z M16.5 16.5 L12 16.5 L13.5 15 L11 12.5 L12.5 11 L15 13.5 L16.5 12 Z" fill="#fff" stroke="#000" stroke-width="0.9"/><rect x="9" y="9" width="2" height="2" fill="#808080"/></svg></div>
<div class="btn" style="left:1254px;top:511px;width:23px;height:22px;"><svg class="a" style="left:0px;top:0px" width="21" height="20" viewBox="0 0 21 20"><path d="M3.5 3.5 H11.5 V14.5 H3.5 Z" fill="#fff" stroke="#000" stroke-width="1.3" shape-rendering="crispEdges"/><path d="M8.5 6.5 H17.5 V17.5 H8.5 Z" fill="#fff" stroke="#000" stroke-width="1.3" shape-rendering="crispEdges"/><path d="M5 6 Q6 5 7 6 M5 9 Q6 8 7 9 M5 12 Q6 11 7 12 M10 9 Q13 8 16 9 M10 12 Q13 11 16 12 M10 15 Q13 14 16 15" stroke="#000" fill="none"/></svg></div>
<div class="btn dn" style="left:1254px;top:538px;width:23px;height:22px;"><svg class="a" style="left:0px;top:0px" width="21" height="20" viewBox="0 0 21 20"><path d="M4.5 3 H8.5 V11 A2 2 0 0 0 12.5 11 V3 H16.5 V12 A6 6 0 0 1 4.5 12 Z" fill="#ff0000" stroke="none"/><rect x="4.5" y="3" width="4" height="3" fill="#000"/><rect x="12.5" y="3" width="4" height="3" fill="#000"/></svg></div>
<div class="a" style="left:1250px;top:565px;width:30px;height:1px;background:#808080"></div><div class="a" style="left:1250px;top:566px;width:30px;height:1px;background:#fff"></div>
<div class="a" style="left:77px;top:75px;width:1173px;height:19px;background:#ffffe6;border-top:1px solid #404040;border-left:1px solid #404040;border-bottom:1px solid #fff"></div>
<div class="a" style="left:82px;top:77px;font-size:13px;font-weight:bold;line-height:15px">12/28/22</div>
<div class="a" style="left:493px;top:77px;font-size:12.3px;font-weight:bold;line-height:15px;color:#000">O:</div>
<div class="a" style="left:512px;top:77px;font-size:12.3px;font-weight:bold;line-height:15px;color:#000">3829.56</div>
<div class="a" style="left:569.5px;top:77px;font-size:12.3px;font-weight:bold;line-height:15px;color:#0000ff">H:</div>
<div class="a" style="left:587.5px;top:77px;font-size:12.3px;font-weight:bold;line-height:15px;color:#000">3848.32</div>
<div class="a" style="left:645.5px;top:77px;font-size:12.3px;font-weight:bold;line-height:15px;color:#ff0000">L:</div>
<div class="a" style="left:663.7px;top:77px;font-size:12.3px;font-weight:bold;line-height:15px;color:#000">3780.78</div>
<div class="a" style="left:721.2px;top:77px;font-size:12.3px;font-weight:bold;line-height:15px;color:#000">C:</div>
<div class="a" style="left:739.5px;top:77px;font-size:12.3px;font-weight:bold;line-height:15px;color:#000">3783.22</div>
<div class="a" style="left:1209px;top:77px;font-size:12.8px;font-weight:bold;line-height:15px;color:#ff0000">-46.03</div>
<div class="a" style="left:76px;top:96px;width:1173px;height:655px;border-top:1px solid #808080;border-left:1px solid #808080;border-bottom:1px solid #fff;border-right:1px solid #fff"></div>
<div class="a" style="left:77px;top:97px;width:1172px;height:653px;border-top:1px solid #000;border-left:1px solid #000;background:#fff"></div>
<div class="a" style="left:1188px;top:97px;width:61px;height:652px;background:#d4d0c8;border-left:1px solid #000;border-right:1px solid #000;border-bottom:1px solid #000"></div>
<div class="a" style="left:1189px;top:97px;width:59px;height:17px;background:#ffffe6;border-bottom:1px solid #000;font-size:13px;font-weight:bold;text-align:center;line-height:16px">4592.51</div>
<div class="a" style="left:76px;top:753px;width:1173px;height:186px;border-top:1px solid #808080;border-left:1px solid #808080;border-bottom:1px solid #fff"></div>
<div class="a" style="left:77px;top:754px;width:1172px;height:184px;border-top:1px solid #000;border-left:1px solid #000;background:#fff"></div>
<div class="a" style="left:1188px;top:754px;width:61px;height:184px;background:#d4d0c8;border-left:1px solid #000;border-right:1px solid #000;border-bottom:1px solid #000"></div>
<div class="a" style="left:1189px;top:910px;width:59px;height:17px;background:#ffffe6;border-top:1px solid #000;border-bottom:1px solid #000;font-size:12.5px;font-weight:bold;text-align:center;line-height:15px">-339</div>
<div class="a" style="left:76px;top:942px;width:1113px;height:22px;border-top:1px solid #808080;border-left:1px solid #808080;border-bottom:1px solid #fff"></div>
<div class="a" style="left:77px;top:943px;width:1111px;height:20px;border-top:1px solid #000;border-left:1px solid #000;border-bottom:1px solid #000;border-right:1px solid #000;background:#d4d0c8"></div>
<div class="a" style="left:1188px;top:943px;width:61px;height:20px;border-top:1px solid #000;background:#ffffe6;color:#0000ff;font-size:13px;font-weight:bold;text-align:center;line-height:20px">#2937</div>
<svg class="a" style="left:0;top:0" width="1280" height="983" viewBox="0 0 1280 983">
<defs><clipPath id="cm"><rect x="78" y="98" width="1110" height="651"/></clipPath><clipPath id="co"><rect x="78" y="755" width="1110" height="166"/></clipPath></defs>
<g clip-path="url(#cm)">
<path d="M78 124.5 H102" stroke="#b4b4b4" stroke-width="1" shape-rendering="crispEdges"/>
<path d="M78 152.5 H256" stroke="#b4b4b4" stroke-width="1" shape-rendering="crispEdges"/>
<path d="M78 159.5 H256" stroke="#b4b4b4" stroke-width="1" shape-rendering="crispEdges"/>
<path d="M136 164.5 H256" stroke="#8c8c8c" stroke-width="1" shape-rendering="crispEdges"/>
<path d="M80 169.5 H102" stroke="#b4b4b4" stroke-width="1" shape-rendering="crispEdges"/>
<path d="M108 169.5 H130" stroke="#b4b4b4" stroke-width="1" shape-rendering="crispEdges"/>
<path d="M178 170.5 H256" stroke="#8c8c8c" stroke-width="1" shape-rendering="crispEdges"/>
<path d="M108 174.5 H116" stroke="#b4b4b4" stroke-width="1" shape-rendering="crispEdges"/>
<path d="M94 175.5 H101" stroke="#8c8c8c" stroke-width="1" shape-rendering="crispEdges"/>
<path d="M220 176.5 H256" stroke="#b4b4b4" stroke-width="1" shape-rendering="crispEdges"/>
<path d="M78 202.5 H291" stroke="#b4b4b4" stroke-width="1" shape-rendering="crispEdges"/>
<path d="M78 208.5 H291" stroke="#8c8c8c" stroke-width="1" shape-rendering="crispEdges"/>
<path d="M136 214.5 H291" stroke="#8c8c8c" stroke-width="1" shape-rendering="crispEdges"/>
<path d="M178 220.5 H291" stroke="#8c8c8c" stroke-width="1" shape-rendering="crispEdges"/>
<path d="M220 225.5 H291" stroke="#b4b4b4" stroke-width="1" shape-rendering="crispEdges"/>
<path d="M227 230.5 H291" stroke="#8c8c8c" stroke-width="1" shape-rendering="crispEdges"/>
<path d="M255 234.5 H291" stroke="#8c8c8c" stroke-width="2" shape-rendering="crispEdges"/>
<path d="M269 151.5 H515" stroke="#b4b4b4" stroke-width="1" shape-rendering="crispEdges"/>
<path d="M269 157.5 H466" stroke="#b4b4b4" stroke-width="1" shape-rendering="crispEdges"/>
<path d="M269 163.5 H389" stroke="#8c8c8c" stroke-width="1" shape-rendering="crispEdges"/>
<path d="M269 168.5 H347" stroke="#8c8c8c" stroke-width="1" shape-rendering="crispEdges"/>
<path d="M269 175.5 H305" stroke="#b4b4b4" stroke-width="1" shape-rendering="crispEdges"/>
<path d="M304 201.5 H585" stroke="#b4b4b4" stroke-width="1" shape-rendering="crispEdges"/>
<path d="M304 206.5 H536" stroke="#8c8c8c" stroke-width="1" shape-rendering="crispEdges"/>
<path d="M304 212.5 H459" stroke="#8c8c8c" stroke-width="1" shape-rendering="crispEdges"/>
<path d="M304 217.5 H417" stroke="#8c8c8c" stroke-width="1" shape-rendering="crispEdges"/>
<path d="M304 222.5 H375" stroke="#b4b4b4" stroke-width="1" shape-rendering="crispEdges"/>
<path d="M304 228.5 H368" stroke="#8c8c8c" stroke-width="1" shape-rendering="crispEdges"/>
<path d="M304 234.5 H341" stroke="#8c8c8c" stroke-width="2" shape-rendering="crispEdges"/>
<path d="M220 273.5 H230" stroke="#8c8c8c" stroke-width="1" shape-rendering="crispEdges"/>
<path d="M234 271.5 H243" stroke="#8c8c8c" stroke-width="1" shape-rendering="crispEdges"/>
<path d="M528 269.5 H550" stroke="#b4b4b4" stroke-width="1" shape-rendering="crispEdges"/>
<path d="M563 267.5 H585" stroke="#b4b4b4" stroke-width="1" shape-rendering="crispEdges"/>
<path d="M528 287.5 H571" stroke="#b4b4b4" stroke-width="1" shape-rendering="crispEdges"/>
<path d="M542 293.5 H571" stroke="#b4b4b4" stroke-width="1" shape-rendering="crispEdges"/>
<path d="M577 285.5 H620" stroke="#b4b4b4" stroke-width="1" shape-rendering="crispEdges"/>
<path d="M577 291.5 H606" stroke="#b4b4b4" stroke-width="1" shape-rendering="crispEdges"/>
<path d="M584 325.5 H634" stroke="#b4b4b4" stroke-width="1" shape-rendering="crispEdges"/>
<path d="M591 329.5 H634" stroke="#b4b4b4" stroke-width="1" shape-rendering="crispEdges"/>
<path d="M633 323.5 H676" stroke="#b4b4b4" stroke-width="1" shape-rendering="crispEdges"/>
<path d="M633 327.5 H669" stroke="#b4b4b4" stroke-width="1" shape-rendering="crispEdges"/>
<path d="M381 339.5 H389" stroke="#b4b4b4" stroke-width="1" shape-rendering="crispEdges"/>
<path d="M402 339.5 H410" stroke="#b4b4b4" stroke-width="1" shape-rendering="crispEdges"/>
<path d="M101 175 V211" stroke="#808080" stroke-width="2" shape-rendering="crispEdges"/>
<path d="M262 177 V211" stroke="#808080" stroke-width="2" shape-rendering="crispEdges"/>
<path d="M297.5 239 V274" stroke="#808080" stroke-width="2" shape-rendering="crispEdges"/>
<path d="M227 273 V306" stroke="#808080" stroke-width="2" shape-rendering="crispEdges"/>
<path d="M555.9 272 V307" stroke="#808080" stroke-width="2" shape-rendering="crispEdges"/>
<path d="M569.9 295 V330" stroke="#808080" stroke-width="2" shape-rendering="crispEdges"/>
<path d="M632.9 330 V364" stroke="#808080" stroke-width="2" shape-rendering="crispEdges"/>
<path d="M395 338 V373" stroke="#808080" stroke-width="2" shape-rendering="crispEdges"/>
<path d="M79.0 272.0 L81.0 272.7 L176.7 300.0 L210.3 313.4 L237.1 323.5 L266.2 335.8 L326.0 362.7 L375.2 378.3 L426.7 394.0 L476.0 403.5 L506.5 410.4 L544.7 416.5 L582.8 421.0 L626.0 428.7 L654.5 433.0" fill="none" stroke="#0000ff" stroke-width="1" stroke-linejoin="round" shape-rendering="crispEdges"/>
<path d="M79.0 358.0 L120.8 360.4 L165.5 366.0 L210.3 373.9 L255.0 382.8 L296.0 390.6 L337.1 394.0 L404.3 403.0 L490.0 409.7 L521.8 411.9 L582.8 413.4 L626.0 417.2 L654.5 419.0" fill="none" stroke="#00ffff" stroke-width="1" stroke-linejoin="round" shape-rendering="crispEdges"/>
<path d="M79.0 293.5 L81.0 294.0 L109.6 305.0 L128.6 304.0 L149.9 311.2 L183.4 331.3 L210.3 360.4 L232.7 376.1 L255.0 387.3 L277.4 405.2 L299.1 425.3 L330.4 438.8 L359.5 438.8 L381.9 437.6 L422.2 443.2 L444.5 435.3 L456.7 429.2 L480.0 423.0 L503.5 412.6 L524.8 402.7 L552.3 392.8 L585.9 387.5 L626.0 392.8 L654.5 400.5" fill="none" stroke="#ff0000" stroke-width="1" stroke-linejoin="round" shape-rendering="crispEdges"/>
<path d="M79.0 237.0 L81.0 235.8 L95.0 225.0 L107.3 218.0 L123.0 229.0 L137.5 257.0 L151.0 293.0 L158.8 316.0 L163.3 329.1 L174.5 339.2 L185.7 349.2 L192.0 364.2 L204.1 360.5 L227.3 361.7 L244.4 372.7 L256.6 391.0 L268.8 444.7 L280.0 470.0 L292.1 500.0 L310.0 545.8 L326.4 559.8 L343.0 538.1 L355.7 525.4 L363.6 505.5 L375.8 483.3 L383.4 478.8 L395.6 480.3 L415.5 475.7 L423.1 481.8 L436.8 456.6 L452.1 433.7 L467.3 424.6 L480.0 417.0 L500.4 386.7 L514.2 381.4 L529.4 361.5 L544.7 368.4 L555.4 375.3 L563.0 395.9 L582.8 394.3 L605.7 381.4 L620.7 372.7 L638.6 379.5 L654.5 377.2" fill="none" stroke="#800000" stroke-width="1" stroke-linejoin="round" shape-rendering="crispEdges"/>
<path d="M79.0 517.5 L101.4 525.4 L129.4 526.7 L149.7 533.1 L173.5 545.6 L191.8 559.4 L210.1 573.0 L234.5 594.5 L260.5 605.0 L283.3 625.0 L295.4 633.2 L310.6 640.9 L327.4 648.5 L345.7 650.0 L379.1 647.6 L404.5 652.7 L422.3 652.7 L447.8 643.8 L490.0 629.7 L517.5 621.5 L544.9 609.1 L592.9 601.2 L615.8 606.7 L654.5 614.0" fill="none" stroke="#008080" stroke-width="1" stroke-linejoin="round" shape-rendering="crispEdges"/>
<path d="M79.0 462.0 L80.0 464.6 L92.8 487.5 L98.9 505.1 L116.7 528.0 L129.4 526.7 L137.0 535.6 L155.2 541.8 L165.0 542.6 L175.0 559.4 L191.8 594.5 L208.2 624.6 L216.0 655.0 L222.1 672.9 L234.0 705.0 L258.7 710.0 L269.4 703.4 L284.5 714.8 L297.2 716.1 L312.5 699.6 L330.3 697.0 L353.1 708.5 L368.9 703.6 L394.3 707.4 L409.6 688.3 L430.0 662.8 L442.7 642.5 L465.6 617.0 L483.4 608.1 L493.6 609.4 L520.2 602.3 L531.2 576.2 L544.9 545.9 L557.3 524.0 L564.2 499.2 L594.4 497.9 L599.9 504.7 L603.0 509.6 L619.5 544.4 L630.4 554.5 L639.6 564.5 L654.5 586.5" fill="none" stroke="#000000" stroke-width="1" stroke-linejoin="round" shape-rendering="crispEdges"/>
<path d="M79.0 397.0 L99.2 433.4 L117.2 415.8 L127.9 393.0 L143.0 420.4 L158.4 449.4 L173.7 473.8 L180.4 499.2 L192.0 541.7 L207.4 568.7 L216.0 579.8 L226.7 607.3 L238.9 598.2 L246.5 581.4 L256.0 562.0 L283.1 624.9 L290.8 618.0 L298.4 624.0 L307.6 610.4 L316.7 596.6 L325.9 595.9 L332.0 582.9 L338.0 569.2 L354.3 530.0 L366.0 502.4 L385.3 517.8 L400.8 525.5 L416.3 510.1 L427.8 463.7 L443.3 440.5 L466.5 437.0 L482.0 430.0 L497.4 425.0 L512.9 401.8 L520.6 386.4 L536.1 417.3 L551.5 428.9 L570.9 417.3 L586.3 409.6 L601.8 456.0 L621.1 502.4 L636.6 494.6 L654.5 510.0" fill="none" stroke="#ff8000" stroke-width="1" stroke-linejoin="round" shape-rendering="crispEdges"/>
<path d="M82.9 460.0 L101.2 496.7 L115.7 481.4 L129.4 449.4 L144.7 473.8 L161.5 510.4 L176.5 545.5 L192.0 591.9 L203.6 607.4 L216.0 637.8 L226.7 663.8 L234.3 657.7 L240.4 634.8 L252.6 621.0 L257.2 619.5 L261.8 631.7 L266.4 654.6 L274.0 669.9 L283.1 680.6 L289.2 676.0 L298.4 683.6 L307.6 665.3 L313.7 657.7 L322.8 653.1 L327.4 648.5 L336.6 628.7 L342.7 610.4 L350.3 595.1 L356.4 587.5 L366.0 572.2 L389.2 579.7 L404.7 587.4 L424.0 587.4 L432.6 556.3 L448.9 507.5 L457.0 502.6 L473.3 497.7 L479.8 499.3 L497.7 473.3 L512.9 483.0 L532.2 444.4 L551.5 483.0 L567.0 486.9 L582.5 479.2 L597.9 494.6 L613.4 544.9 L636.6 556.5 L654.5 571.0" fill="none" stroke="#ff8000" stroke-width="1" stroke-linejoin="round" shape-rendering="crispEdges"/>
<path d="M78.0 270.5 L81.0 272.7 L102.8 293.0 L114.0 300.0 L132.0 313.4 L149.9 340.3 L170.0 369.4 L188.9 396.0 L201.3 420.9 L208.8 429.5 L221.5 443.2 L232.7 461.1 L250.6 472.3 L264.0 492.5 L279.4 522.9 L297.2 543.2 L315.0 555.9 L327.7 560.5 L343.0 555.9 L360.8 543.2 L375.8 525.3 L397.1 525.3 L412.4 514.6 L433.8 485.6 L452.1 467.3 L467.3 451.3 L480.0 441.4 L512.6 421.0 L537.0 390.5 L561.5 376.0 L585.9 373.7 L605.7 378.3 L626.0 390.5 L654.5 409.7" fill="none" stroke="#a0a0a0" stroke-width="2.2" stroke-linejoin="round" shape-rendering="crispEdges"/>
<path d="M78.0 417.0 L80.0 418.6 L101.2 435.6 L127.5 450.0 L144.7 473.0 L152.9 488.0 L170.0 507.0 L181.1 524.3 L205.5 567.0 L222.3 585.3 L237.6 601.3 L257.2 614.9 L271.0 644.0 L284.7 660.7 L301.5 678.3 L322.8 689.7 L345.7 680.6 L358.7 673.0 L379.0 657.8 L396.9 656.5 L417.2 637.4 L429.3 625.0 L448.9 601.9 L474.9 575.9 L501.0 562.0 L520.0 553.0 L542.2 533.6 L564.2 514.3 L593.8 514.2 L606.6 518.8 L625.0 527.9 L643.3 538.9 L654.5 546.2" fill="none" stroke="#a0a0a0" stroke-width="2.2" stroke-linejoin="round" shape-rendering="crispEdges"/>
<path d="M79.0 344.5 L129.7 380.5 L149.9 409.6 L176.7 443.2 L199.1 472.3 L221.5 513.5 L228.4 522.8 L240.6 533.5 L255.9 547.2 L271.1 573.2 L277.0 579.9 L295.4 601.3 L313.7 618.1 L330.5 621.9 L350.3 607.4 L366.0 593.5 L396.9 586.8 L421.2 567.3 L440.7 541.2 L460.3 523.3 L478.2 508.7 L501.0 489.9 L520.6 482.4 L543.8 459.2 L559.3 443.7 L590.2 441.8 L613.4 451.5 L625.0 457.5 L654.5 474.5" fill="none" stroke="#00ffff" stroke-width="1" stroke-linejoin="round" shape-rendering="crispEdges"/>
<path d="M79.0 353.5 L129.7 389.5 L149.9 418.6 L176.7 452.2 L199.1 481.3 L221.5 522.5 L228.4 531.8 L240.6 542.5 L255.9 556.2 L271.1 582.2 L277.0 588.9 L295.4 610.3 L313.7 627.1 L330.5 630.9 L350.3 616.4 L366.0 602.5 L396.9 595.8 L421.2 576.3 L440.7 550.2 L460.3 532.3 L478.2 517.7 L501.0 498.9 L520.6 491.4 L543.8 468.2 L559.3 452.7 L590.2 450.8 L613.4 460.5 L625.0 466.5 L654.5 483.5" fill="none" stroke="#00ffff" stroke-width="1" stroke-linejoin="round" shape-rendering="crispEdges"/>
<path d="M79.0 348.5 L129.7 384.5 L149.9 413.6 L176.7 447.2 L199.1 476.3 L221.5 517.5 L228.4 526.8 L240.6 537.5 L255.9 551.2 L271.1 577.2 L277.0 583.9 L295.4 605.3 L313.7 622.1 L330.5 625.9 L350.3 611.4 L366.0 597.5 L396.9 590.8 L421.2 571.3 L440.7 545.2 L460.3 527.3 L478.2 512.7 L501.0 493.9 L520.6 486.4 L543.8 463.2 L559.3 447.7 L590.2 445.8 L613.4 455.5 L625.0 461.5 L654.5 478.5" fill="none" stroke="#ffff00" stroke-width="1" stroke-linejoin="round" shape-rendering="crispEdges"/>
<path d="M79.0 349.5 L129.7 385.5 L149.9 414.6 L176.7 448.2 L199.1 477.3 L221.5 518.5 L228.4 527.8 L240.6 538.5 L255.9 552.2 L271.1 578.2 L277.0 584.9 L295.4 606.3 L313.7 623.1 L330.5 626.9 L350.3 612.4 L366.0 598.5 L396.9 591.8 L421.2 572.3 L440.7 546.2 L460.3 528.3 L478.2 513.7 L501.0 494.9 L520.6 487.4 L543.8 464.2 L559.3 448.7 L590.2 446.8 L613.4 456.5 L625.0 462.5 L654.5 479.5" fill="none" stroke="#008080" stroke-width="1" stroke-linejoin="round" shape-rendering="crispEdges"/>
<path d="M79.0 421.0 L99.2 464.0 L110.8 456.0 L126.3 418.0 L137.8 437.0 L157.2 472.0 L176.5 510.0 L188.1 561.0 L199.7 592.0 L211.3 607.0 L228.2 629.8 L254.1 586.3 L283.1 648.0 L290.8 639.7 L301.5 625.0 L310.6 619.0 L325.9 620.6 L338.0 585.5 L350.3 558.0 L362.0 530.0 L381.5 516.7 L396.9 543.7 L412.4 549.5 L424.0 536.0 L431.7 489.6 L443.3 466.4 L466.5 458.7 L482.0 447.1 L493.6 427.8 L509.0 443.2 L528.4 400.7 L547.7 431.6 L563.1 451.0 L582.5 443.2 L597.9 478.0 L613.4 516.7 L625.0 512.8 L640.4 520.5 L654.5 532.1" fill="none" stroke="#ff00ff" stroke-width="1" stroke-linejoin="round" shape-rendering="crispEdges"/>
<path d="M79.0 431.0 L99.2 474.0 L110.8 466.0 L126.3 428.0 L137.8 447.0 L157.2 482.0 L176.5 520.0 L188.1 571.0 L199.7 602.0 L211.3 617.0 L228.2 639.8 L254.1 596.3 L283.1 658.0 L290.8 649.7 L301.5 635.0 L310.6 629.0 L325.9 630.6 L338.0 595.5 L350.3 568.0 L362.0 540.0 L381.5 526.7 L396.9 553.7 L412.4 559.5 L424.0 546.0 L431.7 499.6 L443.3 476.4 L466.5 468.7 L482.0 457.1 L493.6 437.8 L509.0 453.2 L528.4 410.7 L547.7 441.6 L563.1 461.0 L582.5 453.2 L597.9 488.0 L613.4 526.7 L625.0 522.8 L640.4 530.5 L654.5 542.1" fill="none" stroke="#ff00ff" stroke-width="1" stroke-linejoin="round" shape-rendering="crispEdges"/>
<path d="M79.0 426.0 L99.2 469.0 L110.8 461.0 L126.3 423.0 L137.8 442.0 L157.2 477.0 L176.5 515.0 L188.1 566.0 L199.7 597.0 L211.3 612.0 L228.2 634.8 L254.1 591.3 L283.1 653.0 L290.8 644.7 L301.5 630.0 L310.6 624.0 L325.9 625.6 L338.0 590.5 L350.3 563.0 L362.0 535.0 L381.5 521.7 L396.9 548.7 L412.4 554.5 L424.0 541.0 L431.7 494.6 L443.3 471.4 L466.5 463.7 L482.0 452.1 L493.6 432.8 L509.0 448.2 L528.4 405.7 L547.7 436.6 L563.1 456.0 L582.5 448.2 L597.9 483.0 L613.4 521.7 L625.0 517.8 L640.4 525.5 L654.5 537.1" fill="none" stroke="#00ff00" stroke-width="1" stroke-linejoin="round" shape-rendering="crispEdges"/>
<path d="M78.0 398.0 L80.0 398.5 L109.6 408.5 L132.0 409.5 L144.0 413.5 L168.0 423.2 L183.0 434.5 L209.0 456.8 L226.0 473.8 L234.5 480.0 L250.6 485.8 L264.0 495.0 L287.0 517.8 L310.0 530.5 L330.3 536.9 L357.5 536.7 L378.8 534.5 L398.7 539.0 L426.1 540.0 L437.5 535.1 L460.3 527.0 L484.7 518.9 L504.2 509.1 L520.0 503.4 L537.0 494.3 L570.6 490.5 L590.1 487.3 L606.6 488.5 L625.0 492.2 L654.5 498.6" fill="none" stroke="#000000" stroke-width="3" stroke-linejoin="round" shape-rendering="crispEdges"/>
<rect x="80" y="433" width="1" height="34" fill="#000000" shape-rendering="crispEdges"/>
<rect x="78" y="440" width="5" height="27" fill="#000000" shape-rendering="crispEdges"/>
<rect x="87" y="458" width="1" height="37" fill="#ff0000" shape-rendering="crispEdges"/>
<rect x="85.5" y="459" width="4" height="17" fill="#fff" stroke="#ff0000" stroke-width="1" shape-rendering="crispEdges"/>
<rect x="94" y="430" width="1" height="60" fill="#ff0000" shape-rendering="crispEdges"/>
<rect x="92" y="443" width="5" height="40" fill="#ff0000" shape-rendering="crispEdges"/>
<rect x="101" y="474" width="1" height="29" fill="#ff0000" shape-rendering="crispEdges"/>
<rect x="99" y="479" width="5" height="13" fill="#ff0000" shape-rendering="crispEdges"/>
<rect x="108" y="447" width="1" height="45" fill="#ff0000" shape-rendering="crispEdges"/>
<rect x="106.5" y="452" width="4" height="40" fill="#fff" stroke="#ff0000" stroke-width="1" shape-rendering="crispEdges"/>
<rect x="115" y="434" width="1" height="38" fill="#ff0000" shape-rendering="crispEdges"/>
<rect x="113.5" y="437" width="4" height="26" fill="#fff" stroke="#ff0000" stroke-width="1" shape-rendering="crispEdges"/>
<rect x="122" y="398" width="1" height="30" fill="#ff0000" shape-rendering="crispEdges"/>
<rect x="120.5" y="402" width="4" height="26" fill="#fff" stroke="#ff0000" stroke-width="1" shape-rendering="crispEdges"/>
<rect x="129" y="373" width="1" height="21" fill="#000000" shape-rendering="crispEdges"/>
<rect x="127.5" y="378" width="4" height="15" fill="#fff" stroke="#000000" stroke-width="1" shape-rendering="crispEdges"/>
<rect x="136" y="419" width="1" height="66" fill="#ff0000" shape-rendering="crispEdges"/>
<rect x="134" y="419" width="5" height="60" fill="#ff0000" shape-rendering="crispEdges"/>
<rect x="143" y="462" width="1" height="27" fill="#ff0000" shape-rendering="crispEdges"/>
<rect x="141.5" y="471" width="4" height="4" fill="#fff" stroke="#ff0000" stroke-width="1" shape-rendering="crispEdges"/>
<rect x="150" y="464" width="1" height="39" fill="#ff0000" shape-rendering="crispEdges"/>
<rect x="148" y="479" width="5" height="18" fill="#ff0000" shape-rendering="crispEdges"/>
<rect x="157" y="508" width="1" height="23" fill="#ff0000" shape-rendering="crispEdges"/>
<rect x="155" y="508" width="5" height="5" fill="#ff0000" shape-rendering="crispEdges"/>
<rect x="164" y="498" width="1" height="34" fill="#ff0000" shape-rendering="crispEdges"/>
<rect x="162.5" y="498" width="4" height="28" fill="#fff" stroke="#ff0000" stroke-width="1" shape-rendering="crispEdges"/>
<rect x="171" y="511" width="1" height="26" fill="#ff0000" shape-rendering="crispEdges"/>
<rect x="169" y="511" width="5" height="11" fill="#ff0000" shape-rendering="crispEdges"/>
<rect x="178" y="494" width="1" height="66" fill="#ff0000" shape-rendering="crispEdges"/>
<rect x="176" y="514" width="5" height="46" fill="#ff0000" shape-rendering="crispEdges"/>
<rect x="185" y="559" width="1" height="19" fill="#ff0000" shape-rendering="crispEdges"/>
<rect x="183" y="563" width="5" height="14" fill="#ff0000" shape-rendering="crispEdges"/>
<rect x="192" y="595" width="1" height="43" fill="#ff0000" shape-rendering="crispEdges"/>
<rect x="190" y="595" width="5" height="19" fill="#ff0000" shape-rendering="crispEdges"/>
<rect x="199" y="602" width="1" height="38" fill="#ff0000" shape-rendering="crispEdges"/>
<rect x="197" y="620" width="5" height="16" fill="#ff0000" shape-rendering="crispEdges"/>
<rect x="206" y="600" width="1" height="52" fill="#ff0000" shape-rendering="crispEdges"/>
<rect x="204" y="618" width="5" height="23" fill="#ff0000" shape-rendering="crispEdges"/>
<rect x="213" y="589" width="1" height="48" fill="#ff0000" shape-rendering="crispEdges"/>
<rect x="211.5" y="599" width="4" height="38" fill="#fff" stroke="#ff0000" stroke-width="1" shape-rendering="crispEdges"/>
<rect x="220" y="602" width="1" height="58" fill="#ff0000" shape-rendering="crispEdges"/>
<rect x="218" y="617" width="5" height="26" fill="#ff0000" shape-rendering="crispEdges"/>
<rect x="227" y="626" width="1" height="48" fill="#ff0000" shape-rendering="crispEdges"/>
<rect x="225" y="647" width="5" height="28" fill="#ff0000" shape-rendering="crispEdges"/>
<rect x="234" y="611" width="1" height="53" fill="#ff0000" shape-rendering="crispEdges"/>
<rect x="232.5" y="623" width="4" height="39" fill="#fff" stroke="#ff0000" stroke-width="1" shape-rendering="crispEdges"/>
<rect x="241" y="558" width="1" height="37" fill="#ff0000" shape-rendering="crispEdges"/>
<rect x="239.5" y="558" width="4" height="37" fill="#fff" stroke="#ff0000" stroke-width="1" shape-rendering="crispEdges"/>
<rect x="248" y="549" width="1" height="47" fill="#ff0000" shape-rendering="crispEdges"/>
<rect x="246.5" y="563" width="4" height="17" fill="#fff" stroke="#ff0000" stroke-width="1" shape-rendering="crispEdges"/>
<rect x="255" y="556" width="1" height="30" fill="#ff0000" shape-rendering="crispEdges"/>
<rect x="253" y="569" width="5" height="17" fill="#ff0000" shape-rendering="crispEdges"/>
<rect x="262" y="605" width="1" height="50" fill="#ff0000" shape-rendering="crispEdges"/>
<rect x="260" y="606" width="5" height="39" fill="#ff0000" shape-rendering="crispEdges"/>
<rect x="269" y="637" width="1" height="36" fill="#ff0000" shape-rendering="crispEdges"/>
<rect x="267" y="640" width="5" height="20" fill="#ff0000" shape-rendering="crispEdges"/>
<rect x="276" y="643" width="1" height="40" fill="#ff0000" shape-rendering="crispEdges"/>
<rect x="274" y="669" width="5" height="5" fill="#ff0000" shape-rendering="crispEdges"/>
<rect x="283" y="662" width="1" height="18" fill="#ff0000" shape-rendering="crispEdges"/>
<rect x="281" y="672" width="5" height="8" fill="#ff0000" shape-rendering="crispEdges"/>
<rect x="290" y="617" width="1" height="109" fill="#ff0000" shape-rendering="crispEdges"/>
<rect x="288.5" y="627" width="4" height="84" fill="#fff" stroke="#ff0000" stroke-width="1" shape-rendering="crispEdges"/>
<rect x="297" y="604" width="1" height="73" fill="#ff0000" shape-rendering="crispEdges"/>
<rect x="295" y="615" width="5" height="62" fill="#ff0000" shape-rendering="crispEdges"/>
<rect x="304" y="616" width="1" height="30" fill="#ff0000" shape-rendering="crispEdges"/>
<rect x="302.5" y="623" width="4" height="23" fill="#fff" stroke="#ff0000" stroke-width="1" shape-rendering="crispEdges"/>
<rect x="311" y="574" width="1" height="42" fill="#ff0000" shape-rendering="crispEdges"/>
<rect x="309" y="584" width="5" height="16" fill="#ff0000" shape-rendering="crispEdges"/>
<rect x="318" y="594" width="1" height="34" fill="#ff0000" shape-rendering="crispEdges"/>
<rect x="316" y="608" width="5" height="5" fill="#ff0000" shape-rendering="crispEdges"/>
<rect x="325" y="590" width="1" height="43" fill="#ff0000" shape-rendering="crispEdges"/>
<rect x="323" y="616" width="5" height="14" fill="#ff0000" shape-rendering="crispEdges"/>
<rect x="332" y="578" width="1" height="62" fill="#ff0000" shape-rendering="crispEdges"/>
<rect x="330.5" y="580" width="4" height="55" fill="#fff" stroke="#ff0000" stroke-width="1" shape-rendering="crispEdges"/>
<rect x="339" y="547" width="1" height="38" fill="#000000" shape-rendering="crispEdges"/>
<rect x="337.5" y="555" width="4" height="20" fill="#fff" stroke="#000000" stroke-width="1" shape-rendering="crispEdges"/>
<rect x="346" y="518" width="1" height="37" fill="#000000" shape-rendering="crispEdges"/>
<rect x="344.5" y="520" width="4" height="35" fill="#fff" stroke="#000000" stroke-width="1" shape-rendering="crispEdges"/>
<rect x="353" y="505" width="1" height="34" fill="#0000ff" shape-rendering="crispEdges"/>
<rect x="351.5" y="537" width="4" height="2" fill="#fff" stroke="#0000ff" stroke-width="1" shape-rendering="crispEdges"/>
<rect x="360" y="519" width="1" height="30" fill="#000000" shape-rendering="crispEdges"/>
<rect x="358" y="534" width="5" height="16" fill="#000000" shape-rendering="crispEdges"/>
<rect x="367" y="495" width="1" height="55" fill="#0000ff" shape-rendering="crispEdges"/>
<rect x="365.5" y="496" width="4" height="53" fill="#fff" stroke="#0000ff" stroke-width="1" shape-rendering="crispEdges"/>
<rect x="374" y="500" width="1" height="18" fill="#0000ff" shape-rendering="crispEdges"/>
<rect x="372" y="507" width="5" height="6" fill="#0000ff" shape-rendering="crispEdges"/>
<rect x="381" y="490" width="1" height="35" fill="#0000ff" shape-rendering="crispEdges"/>
<rect x="379" y="496" width="5" height="26" fill="#0000ff" shape-rendering="crispEdges"/>
<rect x="388" y="500" width="1" height="76" fill="#0000ff" shape-rendering="crispEdges"/>
<rect x="386" y="523" width="5" height="53" fill="#0000ff" shape-rendering="crispEdges"/>
<rect x="395" y="581" width="1" height="29" fill="#000000" shape-rendering="crispEdges"/>
<rect x="393" y="590" width="5" height="10" fill="#000000" shape-rendering="crispEdges"/>
<rect x="402" y="555" width="1" height="50" fill="#000000" shape-rendering="crispEdges"/>
<rect x="400.5" y="571" width="4" height="2" fill="#fff" stroke="#000000" stroke-width="1" shape-rendering="crispEdges"/>
<rect x="409" y="545" width="1" height="28" fill="#000000" shape-rendering="crispEdges"/>
<rect x="407.5" y="551" width="4" height="14" fill="#fff" stroke="#000000" stroke-width="1" shape-rendering="crispEdges"/>
<rect x="416" y="520" width="1" height="40" fill="#000000" shape-rendering="crispEdges"/>
<rect x="414.5" y="538" width="4" height="6" fill="#fff" stroke="#000000" stroke-width="1" shape-rendering="crispEdges"/>
<rect x="423" y="543" width="1" height="42" fill="#000000" shape-rendering="crispEdges"/>
<rect x="421" y="547" width="5" height="35" fill="#000000" shape-rendering="crispEdges"/>
<rect x="430" y="464" width="1" height="56" fill="#0000ff" shape-rendering="crispEdges"/>
<rect x="428.5" y="465" width="4" height="56" fill="#fff" stroke="#0000ff" stroke-width="1" shape-rendering="crispEdges"/>
<rect x="437" y="439" width="1" height="33" fill="#0000ff" shape-rendering="crispEdges"/>
<rect x="435.5" y="444" width="4" height="17" fill="#fff" stroke="#0000ff" stroke-width="1" shape-rendering="crispEdges"/>
<rect x="444" y="435" width="1" height="29" fill="#0000ff" shape-rendering="crispEdges"/>
<rect x="442" y="453" width="5" height="12" fill="#0000ff" shape-rendering="crispEdges"/>
<rect x="451" y="424" width="1" height="43" fill="#0000ff" shape-rendering="crispEdges"/>
<rect x="449" y="438" width="5" height="8" fill="#0000ff" shape-rendering="crispEdges"/>
<rect x="458" y="450" width="1" height="14" fill="#0000ff" shape-rendering="crispEdges"/>
<rect x="456" y="454" width="5" height="11" fill="#0000ff" shape-rendering="crispEdges"/>
<rect x="465" y="466" width="1" height="26" fill="#0000ff" shape-rendering="crispEdges"/>
<rect x="463.5" y="472" width="4" height="14" fill="#fff" stroke="#0000ff" stroke-width="1" shape-rendering="crispEdges"/>
<rect x="472" y="452" width="1" height="24" fill="#0000ff" shape-rendering="crispEdges"/>
<rect x="470" y="459" width="5" height="2" fill="#0000ff" shape-rendering="crispEdges"/>
<rect x="479" y="465" width="1" height="12" fill="#0000ff" shape-rendering="crispEdges"/>
<rect x="477" y="465" width="5" height="5" fill="#0000ff" shape-rendering="crispEdges"/>
<rect x="486" y="437" width="1" height="28" fill="#0000ff" shape-rendering="crispEdges"/>
<rect x="484.5" y="439" width="4" height="21" fill="#fff" stroke="#0000ff" stroke-width="1" shape-rendering="crispEdges"/>
<rect x="493" y="421" width="1" height="19" fill="#0000ff" shape-rendering="crispEdges"/>
<rect x="491.5" y="426" width="4" height="14" fill="#fff" stroke="#0000ff" stroke-width="1" shape-rendering="crispEdges"/>
<rect x="500" y="422" width="1" height="7" fill="#0000ff" shape-rendering="crispEdges"/>
<rect x="498" y="426" width="5" height="2" fill="#0000ff" shape-rendering="crispEdges"/>
<rect x="507" y="433" width="1" height="31" fill="#0000ff" shape-rendering="crispEdges"/>
<rect x="505" y="437" width="5" height="24" fill="#0000ff" shape-rendering="crispEdges"/>
<rect x="514" y="453" width="1" height="22" fill="#0000ff" shape-rendering="crispEdges"/>
<rect x="512" y="461" width="5" height="4" fill="#0000ff" shape-rendering="crispEdges"/>
<rect x="521" y="395" width="1" height="79" fill="#0000ff" shape-rendering="crispEdges"/>
<rect x="519.5" y="395" width="4" height="70" fill="#fff" stroke="#0000ff" stroke-width="1" shape-rendering="crispEdges"/>
<rect x="528" y="384" width="1" height="28" fill="#0000ff" shape-rendering="crispEdges"/>
<rect x="526" y="391" width="5" height="6" fill="#0000ff" shape-rendering="crispEdges"/>
<rect x="535" y="395" width="1" height="29" fill="#0000ff" shape-rendering="crispEdges"/>
<rect x="533.5" y="400" width="4" height="18" fill="#fff" stroke="#0000ff" stroke-width="1" shape-rendering="crispEdges"/>
<rect x="542" y="400" width="1" height="48" fill="#0000ff" shape-rendering="crispEdges"/>
<rect x="540" y="411" width="5" height="30" fill="#0000ff" shape-rendering="crispEdges"/>
<rect x="549" y="439" width="1" height="46" fill="#0000ff" shape-rendering="crispEdges"/>
<rect x="547" y="442" width="5" height="33" fill="#0000ff" shape-rendering="crispEdges"/>
<rect x="556" y="464" width="1" height="20" fill="#000000" shape-rendering="crispEdges"/>
<rect x="554" y="478" width="5" height="2" fill="#000000" shape-rendering="crispEdges"/>
<rect x="563" y="455" width="1" height="21" fill="#0000ff" shape-rendering="crispEdges"/>
<rect x="561.5" y="462" width="4" height="8" fill="#fff" stroke="#0000ff" stroke-width="1" shape-rendering="crispEdges"/>
<rect x="570" y="453" width="1" height="24" fill="#0000ff" shape-rendering="crispEdges"/>
<rect x="568" y="466" width="5" height="11" fill="#0000ff" shape-rendering="crispEdges"/>
<rect x="577" y="446" width="1" height="29" fill="#000000" shape-rendering="crispEdges"/>
<rect x="575.5" y="447" width="4" height="28" fill="#fff" stroke="#000000" stroke-width="1" shape-rendering="crispEdges"/>
<rect x="584" y="383" width="1" height="60" fill="#0000ff" shape-rendering="crispEdges"/>
<rect x="582" y="401" width="5" height="28" fill="#0000ff" shape-rendering="crispEdges"/>
<rect x="591" y="410" width="1" height="49" fill="#0000ff" shape-rendering="crispEdges"/>
<rect x="589" y="432" width="5" height="11" fill="#0000ff" shape-rendering="crispEdges"/>
<rect x="598" y="464" width="1" height="43" fill="#000000" shape-rendering="crispEdges"/>
<rect x="596" y="464" width="5" height="36" fill="#000000" shape-rendering="crispEdges"/>
<rect x="605" y="502" width="1" height="35" fill="#000000" shape-rendering="crispEdges"/>
<rect x="603" y="502" width="5" height="22" fill="#000000" shape-rendering="crispEdges"/>
<rect x="612" y="522" width="1" height="29" fill="#000000" shape-rendering="crispEdges"/>
<rect x="610" y="523" width="5" height="20" fill="#000000" shape-rendering="crispEdges"/>
<rect x="619" y="532" width="1" height="23" fill="#000000" shape-rendering="crispEdges"/>
<rect x="617.5" y="541" width="4" height="6" fill="#fff" stroke="#000000" stroke-width="1" shape-rendering="crispEdges"/>
<rect x="626" y="503" width="1" height="28" fill="#000000" shape-rendering="crispEdges"/>
<rect x="624.5" y="509" width="4" height="22" fill="#fff" stroke="#000000" stroke-width="1" shape-rendering="crispEdges"/>
<rect x="633" y="523" width="1" height="50" fill="#ff0000" shape-rendering="crispEdges"/>
<rect x="631" y="523" width="5" height="18" fill="#ff0000" shape-rendering="crispEdges"/>
<rect x="640" y="527" width="1" height="28" fill="#ff0000" shape-rendering="crispEdges"/>
<rect x="638.5" y="529" width="4" height="16" fill="#fff" stroke="#ff0000" stroke-width="1" shape-rendering="crispEdges"/>
<rect x="647" y="527" width="1" height="18" fill="#000000" shape-rendering="crispEdges"/>
<rect x="645" y="529" width="5" height="8" fill="#000000" shape-rendering="crispEdges"/>
<rect x="654" y="526" width="1" height="38" fill="#ff0000" shape-rendering="crispEdges"/>
<rect x="652" y="537" width="5" height="26" fill="#ff0000" shape-rendering="crispEdges"/>
<path d="M136 328 V352.6 M127 331.6 L136 352.6 L145 331.6" stroke="#ff0000" stroke-width="2.00" fill="none" shape-rendering="crispEdges"/>
<path d="M94 391 V416 M85 395 L94 416 L103 395" stroke="#ff0000" stroke-width="2.00" fill="none" shape-rendering="crispEdges"/>
<path d="M220 555 V580.7 M210 559.7 L220 580.7 L230 559.7" stroke="#ff0000" stroke-width="2.00" fill="none" shape-rendering="crispEdges"/>
<path d="M262 511 V536.5 M252 515.5 L262 536.5 L272 515.5" stroke="#ff0000" stroke-width="2.00" fill="none" shape-rendering="crispEdges"/>
<path d="M297 552 V576.3 M288 558.3 L297 576.3 L306 558.3" stroke="#ff0000" stroke-width="2.00" fill="none" shape-rendering="crispEdges"/>
<path d="M395 484 V509.3 M385.5 488.3 L395 509.3 L404.5 488.3" stroke="#ff0000" stroke-width="2.00" fill="none" shape-rendering="crispEdges"/>
<path d="M423 456 V481.8 M413.5 460.8 L423 481.8 L432.5 460.8" stroke="#ff0000" stroke-width="2.00" fill="none" shape-rendering="crispEdges"/>
<path d="M549 386.7 V410.4 M540 390.4 L549 410.4 L558 390.4" stroke="#ff0000" stroke-width="2.00" fill="none" shape-rendering="crispEdges"/>
<path d="M570 402 V427.1 M560.5 406.1 L570 427.1 L579.5 406.1" stroke="#ff0000" stroke-width="2.00" fill="none" shape-rendering="crispEdges"/>
<path d="M598 379 V404.3 M588.5 383.3 L598 404.3 L607.5 383.3" stroke="#ff0000" stroke-width="2.00" fill="none" shape-rendering="crispEdges"/>
<path d="M633 458 V483 M624.5 463 L633 483 L641.5 463" stroke="#ff0000" stroke-width="2.00" fill="none" shape-rendering="crispEdges"/>
<path d="M654 442.7 V468.4 M644 447.4 L654 468.4 L664 447.4" stroke="#ff0000" stroke-width="2.00" fill="none" shape-rendering="crispEdges"/>
<path d="M403 511.6 V535 M396 519 L403 535 L410 519" stroke="#ff0000" stroke-width="1.00" fill="none" shape-rendering="crispEdges"/>
<path d="M325 500 V521 M316 503 L325 521 L334 503" stroke="#808080" stroke-width="2.00" fill="none" shape-rendering="crispEdges"/>
<path d="M388 455 V479.5 M378.5 458.5 L388 479.5 L397.5 458.5" stroke="#808080" stroke-width="2.00" fill="none" shape-rendering="crispEdges"/>
<path d="M423 497 V522.2 M413.5 501.20000000000005 L423 522.2 L432.5 501.20000000000005" stroke="#808080" stroke-width="2.00" fill="none" shape-rendering="crispEdges"/>
<path d="M507 370 V395 M497 374 L507 395 L517 374" stroke="#808080" stroke-width="2.00" fill="none" shape-rendering="crispEdges"/>
<path d="M542 355 V380.6 M533 359.6 L542 380.6 L551 359.6" stroke="#808080" stroke-width="2.00" fill="none" shape-rendering="crispEdges"/>
<path d="M108 534.3 V502.5 M99 522.5 L108 502.5 L117 522.5" stroke="#00ff00" stroke-width="2.00" fill="none" shape-rendering="crispEdges"/>
<path d="M94 547 V514 M87 528 L94 514 L101 528" stroke="#00ff00" stroke-width="1.00" fill="none" shape-rendering="crispEdges"/>
<path d="M213 687 V655 M204 675 L213 655 L222 675" stroke="#00ff00" stroke-width="2.00" fill="none" shape-rendering="crispEdges"/>
<path d="M234 715 V683 M224.5 704 L234 683 L243.5 704" stroke="#00ff00" stroke-width="2.00" fill="none" shape-rendering="crispEdges"/>
<path d="M290 748 V725 M281 745 L290 725 L299 745" stroke="#00ff00" stroke-width="2.00" fill="none" shape-rendering="crispEdges"/>
<path d="M304 725 V693.2 M295 713.2 L304 693.2 L313 713.2" stroke="#00ff00" stroke-width="2.00" fill="none" shape-rendering="crispEdges"/>
<path d="M332 704 V672.2 M322 693.2 L332 672.2 L342 693.2" stroke="#00ff00" stroke-width="2.00" fill="none" shape-rendering="crispEdges"/>
<path d="M408 625 V601.8 M398.5 622.8 L408 601.8 L417.5 622.8" stroke="#00ff00" stroke-width="2.00" fill="none" shape-rendering="crispEdges"/>
<path d="M431 621 V588 M421.5 609 L431 588 L440.5 609" stroke="#00ff00" stroke-width="2.00" fill="none" shape-rendering="crispEdges"/>
<path d="M403 653 V623.4 M396 639.4 L403 623.4 L410 639.4" stroke="#00ff00" stroke-width="1.00" fill="none" shape-rendering="crispEdges"/>
<path d="M521 548.7 V515.7 M511 537.7 L521 515.7 L531 537.7" stroke="#00ff00" stroke-width="2.00" fill="none" shape-rendering="crispEdges"/>
<path d="M577 526 V495 M568 515 L577 495 L586 515" stroke="#00ff00" stroke-width="2.00" fill="none" shape-rendering="crispEdges"/>
<path d="M626 592 V560 M617 581 L626 560 L635 581" stroke="#00ff00" stroke-width="2.00" fill="none" shape-rendering="crispEdges"/>
<path d="M563 535 V502 M555 524 L563 502 L571 524" stroke="#808080" stroke-width="2.00" fill="none" shape-rendering="crispEdges"/>
<path d="M640 597.5 V566.4 M630.5 586.4 L640 566.4 L649.5 586.4" stroke="#808080" stroke-width="2.00" fill="none" shape-rendering="crispEdges"/>
<path d="M129 744 V717.4 M122.5 731.4 L129 717.4 L135.5 731.4" stroke="#808080" stroke-width="1.00" fill="none" shape-rendering="crispEdges"/>
<path d="M213 744 V717.4 M206.5 731.4 L213 717.4 L219.5 731.4" stroke="#808080" stroke-width="1.00" fill="none" shape-rendering="crispEdges"/>
<path d="M353 744 V717.4 M346.5 731.4 L353 717.4 L359.5 731.4" stroke="#808080" stroke-width="1.00" fill="none" shape-rendering="crispEdges"/>
<path d="M710 748 V722 M704 736 L710 722 L716 736" stroke="#808080" stroke-width="1.00" fill="none" shape-rendering="crispEdges"/>
<path d="M836 748 V722 M830 736 L836 722 L842 736" stroke="#808080" stroke-width="1.00" fill="none" shape-rendering="crispEdges"/>
<path d="M206 98 V121.7 M200 107.7 L206 121.7 L212 107.7" stroke="#008080" stroke-width="1.00" fill="none" shape-rendering="crispEdges"/>
<path d="M206 112 V131.8 M200 117.80000000000001 L206 131.8 L212 117.80000000000001" stroke="#ff00ff" stroke-width="1.00" fill="none" shape-rendering="crispEdges"/>
<path d="M269.5 98 V124 M263.5 109 L269.5 124 L275.5 109" stroke="#ff00ff" stroke-width="1.00" fill="none" shape-rendering="crispEdges"/>
<path d="M290.6 98 V124 M284.6 109 L290.6 124 L296.6 109" stroke="#008080" stroke-width="1.00" fill="none" shape-rendering="crispEdges"/>
<path d="M339.4 98 V122 M333.4 107 L339.4 122 L345.4 107" stroke="#ff00ff" stroke-width="1.00" fill="none" shape-rendering="crispEdges"/>
<path d="M346.5 98 V122 M340.5 107 L346.5 122 L352.5 107" stroke="#008080" stroke-width="1.00" fill="none" shape-rendering="crispEdges"/>
<path d="M402.4 100 V125 M396.4 110 L402.4 125 L408.4 110" stroke="#008080" stroke-width="1.00" fill="none" shape-rendering="crispEdges"/>
<path d="M458.4 98 V122 M452.4 107 L458.4 122 L464.4 107" stroke="#ff00ff" stroke-width="1.00" fill="none" shape-rendering="crispEdges"/>
<path d="M507.6 98 V123 M501.6 108 L507.6 123 L513.6 108" stroke="#ff00ff" stroke-width="1.00" fill="none" shape-rendering="crispEdges"/>
<path d="M528.5 98 V121 M522.5 106 L528.5 121 L534.5 106" stroke="#008080" stroke-width="1.00" fill="none" shape-rendering="crispEdges"/>
<path d="M591.6 99 V124 M585.6 109 L591.6 124 L597.6 109" stroke="#008080" stroke-width="1.00" fill="none" shape-rendering="crispEdges"/>
<path d="M697 98 V122 M691 107 L697 122 L703 107" stroke="#ff00ff" stroke-width="1.00" fill="none" shape-rendering="crispEdges"/>
<path d="M710 98 V122 M704 107 L710 122 L716 107" stroke="#008080" stroke-width="1.00" fill="none" shape-rendering="crispEdges"/>
</g>
<g clip-path="url(#co)">
<rect x="80" y="819" width="1" height="7" fill="#0000ff" shape-rendering="crispEdges"/>
<rect x="87" y="819" width="1" height="21" fill="#0000ff" shape-rendering="crispEdges"/>
<rect x="94" y="819" width="1" height="33" fill="#0000ff" shape-rendering="crispEdges"/>
<rect x="101" y="819" width="1" height="41" fill="#0000ff" shape-rendering="crispEdges"/>
<rect x="108" y="819" width="1" height="45" fill="#0000ff" shape-rendering="crispEdges"/>
<rect x="115" y="819" width="1" height="45" fill="#0000ff" shape-rendering="crispEdges"/>
<rect x="122" y="819" width="1" height="39" fill="#0000ff" shape-rendering="crispEdges"/>
<rect x="129" y="819" width="1" height="32" fill="#0000ff" shape-rendering="crispEdges"/>
<rect x="136" y="819" width="1" height="29" fill="#0000ff" shape-rendering="crispEdges"/>
<rect x="143" y="819" width="1" height="29" fill="#0000ff" shape-rendering="crispEdges"/>
<rect x="150" y="819" width="1" height="32" fill="#0000ff" shape-rendering="crispEdges"/>
<rect x="157" y="819" width="1" height="42" fill="#0000ff" shape-rendering="crispEdges"/>
<rect x="164" y="819" width="1" height="53" fill="#0000ff" shape-rendering="crispEdges"/>
<rect x="171" y="819" width="1" height="58" fill="#0000ff" shape-rendering="crispEdges"/>
<rect x="178" y="819" width="1" height="60" fill="#0000ff" shape-rendering="crispEdges"/>
<rect x="185" y="819" width="1" height="66" fill="#0000ff" shape-rendering="crispEdges"/>
<rect x="192" y="819" width="1" height="73" fill="#0000ff" shape-rendering="crispEdges"/>
<rect x="199" y="819" width="1" height="80" fill="#0000ff" shape-rendering="crispEdges"/>
<rect x="206" y="819" width="1" height="87" fill="#0000ff" shape-rendering="crispEdges"/>
<rect x="213" y="819" width="1" height="92" fill="#0000ff" shape-rendering="crispEdges"/>
<rect x="220" y="819" width="1" height="95" fill="#0000ff" shape-rendering="crispEdges"/>
<rect x="227" y="819" width="1" height="93" fill="#0000ff" shape-rendering="crispEdges"/>
<rect x="234" y="819" width="1" height="90" fill="#0000ff" shape-rendering="crispEdges"/>
<rect x="241" y="819" width="1" height="80" fill="#0000ff" shape-rendering="crispEdges"/>
<rect x="248" y="819" width="1" height="72" fill="#0000ff" shape-rendering="crispEdges"/>
<rect x="255" y="819" width="1" height="60" fill="#0000ff" shape-rendering="crispEdges"/>
<rect x="262" y="819" width="1" height="53" fill="#0000ff" shape-rendering="crispEdges"/>
<rect x="269" y="819" width="1" height="49" fill="#0000ff" shape-rendering="crispEdges"/>
<rect x="276" y="819" width="1" height="55" fill="#0000ff" shape-rendering="crispEdges"/>
<rect x="283" y="819" width="1" height="60" fill="#0000ff" shape-rendering="crispEdges"/>
<rect x="290" y="819" width="1" height="66" fill="#0000ff" shape-rendering="crispEdges"/>
<rect x="297" y="819" width="1" height="63" fill="#0000ff" shape-rendering="crispEdges"/>
<rect x="304" y="819" width="1" height="56" fill="#0000ff" shape-rendering="crispEdges"/>
<rect x="311" y="819" width="1" height="46" fill="#0000ff" shape-rendering="crispEdges"/>
<rect x="318" y="819" width="1" height="38" fill="#0000ff" shape-rendering="crispEdges"/>
<rect x="325" y="819" width="1" height="28" fill="#0000ff" shape-rendering="crispEdges"/>
<rect x="332" y="819" width="1" height="24" fill="#0000ff" shape-rendering="crispEdges"/>
<rect x="339" y="819" width="1" height="16" fill="#0000ff" shape-rendering="crispEdges"/>
<rect x="346" y="819" width="1" height="8" fill="#0000ff" shape-rendering="crispEdges"/>
<rect x="353" y="818" width="1" height="1" fill="#0000ff" shape-rendering="crispEdges"/>
<rect x="360" y="808" width="1" height="11" fill="#0000ff" shape-rendering="crispEdges"/>
<rect x="367" y="798" width="1" height="21" fill="#0000ff" shape-rendering="crispEdges"/>
<rect x="374" y="790" width="1" height="29" fill="#0000ff" shape-rendering="crispEdges"/>
<rect x="381" y="786" width="1" height="33" fill="#0000ff" shape-rendering="crispEdges"/>
<rect x="388" y="787" width="1" height="32" fill="#0000ff" shape-rendering="crispEdges"/>
<rect x="395" y="792" width="1" height="27" fill="#0000ff" shape-rendering="crispEdges"/>
<rect x="402" y="797" width="1" height="22" fill="#0000ff" shape-rendering="crispEdges"/>
<rect x="409" y="801" width="1" height="18" fill="#0000ff" shape-rendering="crispEdges"/>
<rect x="416" y="804" width="1" height="15" fill="#0000ff" shape-rendering="crispEdges"/>
<rect x="423" y="806" width="1" height="13" fill="#0000ff" shape-rendering="crispEdges"/>
<rect x="430" y="797" width="1" height="22" fill="#0000ff" shape-rendering="crispEdges"/>
<rect x="437" y="786" width="1" height="33" fill="#0000ff" shape-rendering="crispEdges"/>
<rect x="444" y="778" width="1" height="41" fill="#0000ff" shape-rendering="crispEdges"/>
<rect x="451" y="771" width="1" height="48" fill="#0000ff" shape-rendering="crispEdges"/>
<rect x="458" y="762" width="1" height="57" fill="#0000ff" shape-rendering="crispEdges"/>
<rect x="465" y="763" width="1" height="56" fill="#0000ff" shape-rendering="crispEdges"/>
<rect x="472" y="767" width="1" height="52" fill="#0000ff" shape-rendering="crispEdges"/>
<rect x="479" y="771" width="1" height="48" fill="#0000ff" shape-rendering="crispEdges"/>
<rect x="486" y="774" width="1" height="45" fill="#0000ff" shape-rendering="crispEdges"/>
<rect x="493" y="773" width="1" height="46" fill="#0000ff" shape-rendering="crispEdges"/>
<rect x="500" y="769" width="1" height="50" fill="#0000ff" shape-rendering="crispEdges"/>
<rect x="507" y="771" width="1" height="48" fill="#0000ff" shape-rendering="crispEdges"/>
<rect x="514" y="773" width="1" height="46" fill="#0000ff" shape-rendering="crispEdges"/>
<rect x="521" y="775" width="1" height="44" fill="#0000ff" shape-rendering="crispEdges"/>
<rect x="528" y="775" width="1" height="44" fill="#0000ff" shape-rendering="crispEdges"/>
<rect x="535" y="778" width="1" height="42" fill="#0000ff" shape-rendering="crispEdges"/>
<rect x="542" y="780" width="1" height="39" fill="#0000ff" shape-rendering="crispEdges"/>
<rect x="549" y="781" width="1" height="38" fill="#0000ff" shape-rendering="crispEdges"/>
<rect x="556" y="787" width="1" height="32" fill="#0000ff" shape-rendering="crispEdges"/>
<rect x="563" y="796" width="1" height="23" fill="#0000ff" shape-rendering="crispEdges"/>
<rect x="570" y="804" width="1" height="15" fill="#0000ff" shape-rendering="crispEdges"/>
<rect x="577" y="809" width="1" height="10" fill="#0000ff" shape-rendering="crispEdges"/>
<rect x="584" y="806" width="1" height="13" fill="#0000ff" shape-rendering="crispEdges"/>
<rect x="591" y="804" width="1" height="15" fill="#0000ff" shape-rendering="crispEdges"/>
<rect x="598" y="806" width="1" height="13" fill="#0000ff" shape-rendering="crispEdges"/>
<rect x="605" y="812" width="1" height="7" fill="#0000ff" shape-rendering="crispEdges"/>
<rect x="612" y="818" width="1" height="1" fill="#0000ff" shape-rendering="crispEdges"/>
<rect x="619" y="819" width="1" height="14" fill="#0000ff" shape-rendering="crispEdges"/>
<rect x="626" y="819" width="1" height="23" fill="#0000ff" shape-rendering="crispEdges"/>
<rect x="633" y="819" width="1" height="29" fill="#0000ff" shape-rendering="crispEdges"/>
<rect x="640" y="819" width="1" height="32" fill="#0000ff" shape-rendering="crispEdges"/>
<rect x="647" y="819" width="1" height="32" fill="#0000ff" shape-rendering="crispEdges"/>
<rect x="654" y="819" width="1" height="33" fill="#0000ff" shape-rendering="crispEdges"/>
<path d="M79.0 778.1 L346.7 778.1 L361.9 782.3 L380.0 783.1 L398.8 783.8 L430.0 788.4 L439.4 787.5 L461.2 783.8 L505.0 780.0 L551.9 779.1 L605.0 788.4 L655.0 788.4" fill="none" stroke="#000" stroke-width="1" stroke-linejoin="round" shape-rendering="crispEdges"/>
<path d="M79.0 854.3 L104.1 853.1 L139.3 853.8 L151.0 853.1 L174.4 856.6 L209.6 864.8 L244.7 875.4 L312.7 875.4 L345.5 867.2 L380.0 867.2 L605.0 867.2 L611.2 864.4 L655.0 859.4" fill="none" stroke="#000" stroke-width="1" stroke-linejoin="round" shape-rendering="crispEdges"/>
<path d="M157 777 V799.2 M148 779.2 L157 799.2 L166 779.2" stroke="#ff0000" stroke-width="2.00" fill="none" shape-rendering="crispEdges"/>
<path d="M283 775 V796.9 M274 776.9 L283 796.9 L292 776.9" stroke="#ff0000" stroke-width="2.00" fill="none" shape-rendering="crispEdges"/>
<path d="M409 760.3 V780.6 M399.5 761.6 L409 780.6 L418.5 761.6" stroke="#ff0000" stroke-width="2.00" fill="none" shape-rendering="crispEdges"/>
<path d="M548.75 754 V767.5 M541.75 754.5 L548.75 767.5 L555.75 754.5" stroke="#ff0000" stroke-width="2.00" fill="none" shape-rendering="crispEdges"/>
<path d="M129.2 900 V879.4 M119.69999999999999 899.4 L129.2 879.4 L138.7 899.4" stroke="#00ff00" stroke-width="2.00" fill="none" shape-rendering="crispEdges"/>
<path d="M241.2 922 V907.5 M232.2 927.5 L241.2 907.5 L250.2 927.5" stroke="#00ff00" stroke-width="2.00" fill="none" shape-rendering="crispEdges"/>
<path d="M311 906.5 V885.5 M301.5 906.5 L311 885.5 L320.5 906.5" stroke="#00ff00" stroke-width="2.00" fill="none" shape-rendering="crispEdges"/>
<path d="M437.2 871.25 V849.4 M427.7 870.4 L437.2 849.4 L446.7 870.4" stroke="#00ff00" stroke-width="2.00" fill="none" shape-rendering="crispEdges"/>
</g>
</svg>
<div class="a" style="left:269px;top:184.7px;font-size:13px;line-height:13px;font-weight:bold;color:#000;white-space:nowrap">DB Structure</div>
<div class="a" style="left:311px;top:272.0px;font-size:13px;line-height:13px;font-weight:bold;color:#000;white-space:nowrap">New T structure</div>
<div class="a" style="left:235px;top:303.2px;font-size:13px;line-height:13px;font-weight:bold;color:#000;white-space:nowrap">Small T</div>
<div class="a" style="left:410px;top:364.2px;font-size:13px;line-height:13px;font-weight:bold;color:#000;white-space:nowrap">Small T</div>
<div class="a" style="left:906.5px;top:128.9px;font-size:13px;line-height:13px;font-weight:bold;color:#000;white-space:nowrap">Next Echo and Pulse Highs</div>
<div class="a" style="left:906.5px;top:192.7px;font-size:13px;line-height:13px;font-weight:bold;color:#000;white-space:nowrap">* S/T SELL SIGNAL *</div>
<div class="a" style="left:906.5px;top:208.2px;font-size:13px;line-height:13px;font-weight:bold;color:#000;white-space:nowrap">* SHORT ALERT *</div>
<div class="a" style="left:906.5px;top:240.5px;font-size:13px;line-height:13px;font-weight:bold;color:#000;white-space:nowrap">S/T SELL Signal at 3819 on 28 Dec</div>
<div class="a" style="left:906.5px;top:272.3px;font-size:13px;line-height:13px;font-weight:bold;color:#000;white-space:nowrap">T volume Osc: negative on 14 Dec</div>
<div class="a" style="left:906.5px;top:288.3px;font-size:13px;line-height:13px;font-weight:bold;color:#000;white-space:nowrap">Down</div>
<div class="a" style="left:906.5px;top:320.7px;font-size:13px;line-height:13px;font-weight:bold;color:#000;white-space:nowrap">Osc: Sell Signal on 06 Dec</div>
<div class="a" style="left:906.5px;top:336.1px;font-size:13px;line-height:13px;font-weight:bold;color:#000;white-space:nowrap">Down &nbsp;a little</div>
<div class="a" style="left:906.5px;top:416.3px;font-size:13px;line-height:13px;font-weight:bold;color:#000;white-space:nowrap">Click here for</div>
<div class="a" style="left:906.5px;top:432.3px;font-size:13px;line-height:13px;font-weight:bold;color:#000;white-space:nowrap">More Information...</div>
<div class="a" style="left:906.5px;top:704.5px;font-size:13px;line-height:13px;font-weight:bold;color:#000;white-space:nowrap">Next Projected Low(s)</div>
<div class="a" style="left:822px;top:191.4px;font-size:12px;line-height:12px;font-weight:bold;color:#000;white-space:nowrap">4412</div>
<div class="a" style="left:808px;top:207px;width:57px;height:1px;background:#ff0000"></div>
<div class="a" style="left:822px;top:304.7px;font-size:12px;line-height:12px;font-weight:bold;color:#000;white-space:nowrap">4214</div>
<div class="a" style="left:808px;top:320px;width:57px;height:1px;background:#ff0000"></div>
<div class="a" style="left:822px;top:414.3px;font-size:12px;line-height:12px;font-weight:bold;color:#000;white-space:nowrap">4016</div>
<div class="a" style="left:808px;top:430px;width:57px;height:1px;background:#ff0000"></div>
<div class="a" style="left:822px;top:627.8px;font-size:12px;line-height:12px;font-weight:bold;color:#000;white-space:nowrap">3641</div>
<div class="a" style="left:808px;top:643px;width:57px;height:1px;background:#ff0000"></div>
<svg class="a" style="left:1189px;top:98px" width="59" height="651" viewBox="1189 98 59 651"><rect x="1190" y="130" width="3" height="2" fill="#000"/><rect x="1190" y="158" width="6" height="2" fill="#000"/><rect x="1190" y="186" width="3" height="2" fill="#000"/><rect x="1190" y="214" width="6" height="2" fill="#000"/><rect x="1190" y="242" width="3" height="2" fill="#000"/><rect x="1190" y="271" width="6" height="2" fill="#000"/><rect x="1190" y="299" width="3" height="2" fill="#000"/><rect x="1190" y="327" width="6" height="2" fill="#000"/><rect x="1190" y="355" width="3" height="2" fill="#000"/><rect x="1190" y="384" width="6" height="2" fill="#000"/><rect x="1190" y="412" width="3" height="2" fill="#000"/><rect x="1190" y="440" width="6" height="2" fill="#000"/><rect x="1190" y="468" width="3" height="2" fill="#000"/><rect x="1190" y="497" width="6" height="2" fill="#000"/><rect x="1190" y="525" width="3" height="2" fill="#000"/><rect x="1190" y="553" width="6" height="2" fill="#000"/><rect x="1190" y="581" width="3" height="2" fill="#000"/><rect x="1190" y="609" width="6" height="2" fill="#000"/><rect x="1190" y="638" width="3" height="2" fill="#000"/><rect x="1190" y="666" width="6" height="2" fill="#000"/><rect x="1190" y="694" width="3" height="2" fill="#000"/><rect x="1190" y="722" width="6" height="2" fill="#000"/><rect x="1190" y="158" width="1" height="1" fill="#000"/><rect x="1190" y="164" width="1" height="1" fill="#000"/><rect x="1190" y="170" width="1" height="1" fill="#000"/><rect x="1190" y="175" width="1" height="1" fill="#000"/><rect x="1190" y="181" width="1" height="1" fill="#000"/><rect x="1190" y="187" width="1" height="1" fill="#000"/><rect x="1190" y="192" width="1" height="1" fill="#000"/><rect x="1190" y="198" width="1" height="1" fill="#000"/><rect x="1190" y="203" width="1" height="1" fill="#000"/><rect x="1190" y="209" width="1" height="1" fill="#000"/><rect x="1190" y="215" width="1" height="1" fill="#000"/><rect x="1190" y="220" width="1" height="1" fill="#000"/><rect x="1190" y="226" width="1" height="1" fill="#000"/><rect x="1190" y="232" width="1" height="1" fill="#000"/><rect x="1190" y="237" width="1" height="1" fill="#000"/><rect x="1190" y="243" width="1" height="1" fill="#000"/><rect x="1190" y="249" width="1" height="1" fill="#000"/><rect x="1190" y="254" width="1" height="1" fill="#000"/><rect x="1190" y="260" width="1" height="1" fill="#000"/><rect x="1190" y="266" width="1" height="1" fill="#000"/><rect x="1190" y="271" width="1" height="1" fill="#000"/><rect x="1190" y="277" width="1" height="1" fill="#000"/><rect x="1190" y="282" width="1" height="1" fill="#000"/><rect x="1190" y="288" width="1" height="1" fill="#000"/><rect x="1190" y="294" width="1" height="1" fill="#000"/><rect x="1190" y="299" width="1" height="1" fill="#000"/><rect x="1190" y="305" width="1" height="1" fill="#000"/><rect x="1190" y="311" width="1" height="1" fill="#000"/><rect x="1190" y="316" width="1" height="1" fill="#000"/><rect x="1190" y="322" width="1" height="1" fill="#000"/><rect x="1190" y="328" width="1" height="1" fill="#000"/><rect x="1190" y="333" width="1" height="1" fill="#000"/><rect x="1190" y="339" width="1" height="1" fill="#000"/><rect x="1190" y="345" width="1" height="1" fill="#000"/><rect x="1190" y="350" width="1" height="1" fill="#000"/><rect x="1190" y="356" width="1" height="1" fill="#000"/><rect x="1190" y="362" width="1" height="1" fill="#000"/><rect x="1190" y="367" width="1" height="1" fill="#000"/><rect x="1190" y="373" width="1" height="1" fill="#000"/><rect x="1190" y="378" width="1" height="1" fill="#000"/><rect x="1190" y="384" width="1" height="1" fill="#000"/><rect x="1190" y="390" width="1" height="1" fill="#000"/><rect x="1190" y="395" width="1" height="1" fill="#000"/><rect x="1190" y="401" width="1" height="1" fill="#000"/><rect x="1190" y="407" width="1" height="1" fill="#000"/><rect x="1190" y="412" width="1" height="1" fill="#000"/><rect x="1190" y="418" width="1" height="1" fill="#000"/><rect x="1190" y="424" width="1" height="1" fill="#000"/><rect x="1190" y="429" width="1" height="1" fill="#000"/><rect x="1190" y="435" width="1" height="1" fill="#000"/><rect x="1190" y="441" width="1" height="1" fill="#000"/><rect x="1190" y="446" width="1" height="1" fill="#000"/><rect x="1190" y="452" width="1" height="1" fill="#000"/><rect x="1190" y="457" width="1" height="1" fill="#000"/><rect x="1190" y="463" width="1" height="1" fill="#000"/><rect x="1190" y="469" width="1" height="1" fill="#000"/><rect x="1190" y="474" width="1" height="1" fill="#000"/><rect x="1190" y="480" width="1" height="1" fill="#000"/><rect x="1190" y="486" width="1" height="1" fill="#000"/><rect x="1190" y="491" width="1" height="1" fill="#000"/><rect x="1190" y="497" width="1" height="1" fill="#000"/><rect x="1190" y="503" width="1" height="1" fill="#000"/><rect x="1190" y="508" width="1" height="1" fill="#000"/><rect x="1190" y="514" width="1" height="1" fill="#000"/><rect x="1190" y="520" width="1" height="1" fill="#000"/><rect x="1190" y="525" width="1" height="1" fill="#000"/><rect x="1190" y="531" width="1" height="1" fill="#000"/><rect x="1190" y="537" width="1" height="1" fill="#000"/><rect x="1190" y="542" width="1" height="1" fill="#000"/><rect x="1190" y="548" width="1" height="1" fill="#000"/><rect x="1190" y="553" width="1" height="1" fill="#000"/><rect x="1190" y="559" width="1" height="1" fill="#000"/><rect x="1190" y="565" width="1" height="1" fill="#000"/><rect x="1190" y="570" width="1" height="1" fill="#000"/><rect x="1190" y="576" width="1" height="1" fill="#000"/><rect x="1190" y="582" width="1" height="1" fill="#000"/><rect x="1190" y="587" width="1" height="1" fill="#000"/><rect x="1190" y="593" width="1" height="1" fill="#000"/><rect x="1190" y="599" width="1" height="1" fill="#000"/><rect x="1190" y="604" width="1" height="1" fill="#000"/><rect x="1190" y="610" width="1" height="1" fill="#000"/><rect x="1190" y="616" width="1" height="1" fill="#000"/><rect x="1190" y="621" width="1" height="1" fill="#000"/><rect x="1190" y="627" width="1" height="1" fill="#000"/><rect x="1190" y="632" width="1" height="1" fill="#000"/><rect x="1190" y="638" width="1" height="1" fill="#000"/><rect x="1190" y="644" width="1" height="1" fill="#000"/><rect x="1190" y="649" width="1" height="1" fill="#000"/><rect x="1190" y="655" width="1" height="1" fill="#000"/><rect x="1190" y="661" width="1" height="1" fill="#000"/><rect x="1190" y="666" width="1" height="1" fill="#000"/><rect x="1190" y="672" width="1" height="1" fill="#000"/><rect x="1190" y="678" width="1" height="1" fill="#000"/><rect x="1190" y="683" width="1" height="1" fill="#000"/><rect x="1190" y="689" width="1" height="1" fill="#000"/><rect x="1190" y="695" width="1" height="1" fill="#000"/><rect x="1190" y="700" width="1" height="1" fill="#000"/><rect x="1190" y="706" width="1" height="1" fill="#000"/><rect x="1190" y="712" width="1" height="1" fill="#000"/><rect x="1190" y="717" width="1" height="1" fill="#000"/><rect x="1190" y="723" width="1" height="1" fill="#000"/><rect x="1190" y="728" width="1" height="1" fill="#000"/><rect x="1190" y="734" width="1" height="1" fill="#000"/><rect x="1190" y="740" width="1" height="1" fill="#000"/><rect x="1190" y="745" width="1" height="1" fill="#000"/><rect x="1190" y="153" width="1" height="1" fill="#000"/><rect x="1190" y="147" width="1" height="1" fill="#000"/><rect x="1190" y="141" width="1" height="1" fill="#000"/><rect x="1190" y="136" width="1" height="1" fill="#000"/><rect x="1190" y="130" width="1" height="1" fill="#000"/><rect x="1190" y="124" width="1" height="1" fill="#000"/><rect x="1190" y="119" width="1" height="1" fill="#000"/></svg>
<div class="a" style="left:1197px;top:150.1px;font-size:12.9px;line-height:16px;font-weight:bold;color:#000">4500.00</div>
<div class="a" style="left:1197px;top:206.6px;font-size:12.9px;line-height:16px;font-weight:bold;color:#000">4400.00</div>
<div class="a" style="left:1197px;top:263.0px;font-size:12.9px;line-height:16px;font-weight:bold;color:#000">4300.00</div>
<div class="a" style="left:1197px;top:319.5px;font-size:12.9px;line-height:16px;font-weight:bold;color:#000">4200.00</div>
<div class="a" style="left:1197px;top:375.9px;font-size:12.9px;line-height:16px;font-weight:bold;color:#000">4100.00</div>
<div class="a" style="left:1197px;top:432.4px;font-size:12.9px;line-height:16px;font-weight:bold;color:#000">4000.00</div>
<div class="a" style="left:1197px;top:488.8px;font-size:12.9px;line-height:16px;font-weight:bold;color:#000">3900.00</div>
<div class="a" style="left:1197px;top:545.2px;font-size:12.9px;line-height:16px;font-weight:bold;color:#000">3800.00</div>
<div class="a" style="left:1197px;top:601.7px;font-size:12.9px;line-height:16px;font-weight:bold;color:#000">3700.00</div>
<div class="a" style="left:1197px;top:658.1px;font-size:12.9px;line-height:16px;font-weight:bold;color:#000">3600.00</div>
<div class="a" style="left:1197px;top:714.6px;font-size:12.9px;line-height:16px;font-weight:bold;color:#000">3500.00</div>
<div class="a" style="left:1224px;top:732px;width:24px;height:17px;background:#c0c0c0;border-left:1px solid #000;border-top:1px solid #000"></div>
<svg class="a" style="left:1225px;top:733px" width="23" height="16"><rect x="1" y="1" width="4" height="4" fill="#808080"/><path d="M4 4 Q11 1 19 4" stroke="#000" fill="none" stroke-width="1.5"/><path d="M10 5 h3 v9 h-3z" fill="#ff0" stroke="#000" stroke-width="0.8"/><path d="M1 12 L4 5 L7 12 Z M16 12 L19 5 L22 12 Z" fill="#fff" stroke="#000" stroke-width="0.8"/><path d="M1 12h6M16 12h6" stroke="#ff0" stroke-width="2"/></svg>
<svg class="a" style="left:1189px;top:755px" width="59" height="155" viewBox="1189 755 59 155"><rect x="1190" y="761" width="1" height="1" fill="#000"/><rect x="1190" y="776" width="1" height="1" fill="#000"/><rect x="1190" y="790" width="1" height="1" fill="#000"/><rect x="1190" y="804" width="1" height="1" fill="#000"/><rect x="1190" y="818" width="7" height="2" fill="#000"/><rect x="1190" y="834" width="1" height="1" fill="#000"/><rect x="1190" y="848" width="1" height="1" fill="#000"/><rect x="1190" y="862" width="1" height="1" fill="#000"/><rect x="1190" y="877" width="1" height="1" fill="#000"/><rect x="1190" y="892" width="3" height="1" fill="#000"/><rect x="1190" y="906" width="1" height="1" fill="#000"/></svg>
<div class="a" style="left:1197px;top:811px;font-size:12.6px;line-height:16px;font-weight:bold">0</div>
<div class="a" style="left:78px;top:755px;font-size:13px;line-height:16px;font-weight:bold">Osc 5,35</div>
<div class="a" style="left:577px;top:759px;font-size:13px;line-height:16px;font-weight:bold">OSc Sell Signal</div>
<div class="a" style="left:78px;top:921px;width:1110px;height:17px;background:#d4d0c8"></div><div class="a" style="left:111px;top:921px;width:1077px;height:1px;background:#000"></div>
<div class="btn" style="left:78px;top:921px;width:16px;height:17px"><svg class="a" style="left:3px;top:3px" width="8" height="9"><path d="M6 0 L1 4.5 L6 9 Z" fill="#000"/></svg></div>
<div class="btn" style="left:95px;top:921px;width:16px;height:17px"><svg class="a" style="left:4px;top:3px" width="8" height="9"><path d="M1 0 L6 4.5 L1 9 Z" fill="#000"/></svg></div>
<svg class="a" style="left:0;top:0" width="1280" height="983" viewBox="0 0 1280 983"><path d="M174.8 922 L180.3 937.5 L213.8 937.5 L208.3 922 Z" fill="#d4d0c8" stroke="none"/><path d="M174.8 922 L180.3 937.5 L213.8 937.5" fill="none" stroke="#000" stroke-width="1"/><path d="M208.3 922 L213.8 937.5 L299.7 937.5 L294.2 922 Z" fill="#d4d0c8" stroke="none"/><path d="M208.3 922 L213.8 937.5 L299.7 937.5" fill="none" stroke="#000" stroke-width="1"/><path d="M294.2 922 L299.7 937.5 L382.8 937.5 L377.3 922 Z" fill="#d4d0c8" stroke="none"/><path d="M294.2 922 L299.7 937.5 L382.8 937.5" fill="none" stroke="#000" stroke-width="1"/><path d="M377.3 922 L382.8 937.5 L448.2 937.5 L442.7 922 Z" fill="#d4d0c8" stroke="none"/><path d="M377.3 922 L382.8 937.5 L448.2 937.5" fill="none" stroke="#000" stroke-width="1"/><path d="M442.7 922 L448.2 937.5 L506.6 937.5 L501.1 922 Z" fill="#d4d0c8" stroke="none"/><path d="M442.7 922 L448.2 937.5 L506.6 937.5" fill="none" stroke="#000" stroke-width="1"/><path d="M501.1 922 L506.6 937.5 L607.8 937.5 L614.8 922" fill="#d4d0c8" stroke="#000" stroke-width="1"/><path d="M111.2 921.5 L119.8 937.5 L168.8 937.5 L174.8 921.5 Z" fill="#fff" stroke="none"/><path d="M111.2 921.5 L119.8 937.5 L168.8 937.5 L174.8 921.5" fill="none" stroke="#000" stroke-width="1"/></svg>
<div class="a" style="left:122.3px;top:924px;font-size:10.7px;line-height:12px;color:#000;white-space:nowrap">Osc 5,35</div>
<div class="a" style="left:176.5px;top:924px;font-size:10.7px;line-height:12px;color:#000;white-space:nowrap">CCI 20</div>
<div class="a" style="left:216.9px;top:924px;font-size:10.7px;line-height:12px;color:#000;white-space:nowrap">MACD 19, 39, 9</div>
<div class="a" style="left:302.6px;top:924px;font-size:10.7px;line-height:12px;color:#000;white-space:nowrap">Money Flow 11</div>
<div class="a" style="left:385.9px;top:924px;font-size:10.7px;line-height:12px;color:#000;white-space:nowrap">RSI 14, 7, 3</div>
<div class="a" style="left:451.3px;top:924px;font-size:10.7px;line-height:12px;color:#000;white-space:nowrap">RSI 2, 7, 3</div>
<div class="a" style="left:510px;top:924px;font-size:10.7px;line-height:12px;color:#000;white-space:nowrap">On Balance Volume</div>
<div class="a" style="left:87px;top:944px;width:1px;height:18px;background:#000"></div>
<div class="a" style="left:381px;top:944px;width:1px;height:18px;background:#000"></div>
<div class="a" style="left:528px;top:944px;width:1px;height:18px;background:#000"></div>
<div class="a" style="left:90px;top:945px;font-size:13px;line-height:15px;font-weight:bold">Sep</div>
<div class="a" style="left:228px;top:945px;font-size:13px;line-height:15px;font-weight:bold">Oct</div>
<div class="a" style="left:383px;top:945px;font-size:13px;line-height:15px;font-weight:bold">Nov</div>
<div class="a" style="left:530px;top:945px;font-size:13px;line-height:15px;font-weight:bold">Dec</div>
<div class="a" style="left:185px;top:945px;width:55px;height:16px;background:#ffffe6;border:1px solid #000;font-size:13px;line-height:14px;font-weight:bold;text-align:center">09/28/22</div>
<div class="a" style="left:0;top:964px;width:1280px;height:1px;background:#fff"></div>
<div class="a" style="left:2px;top:969.5px;white-space:nowrap;font-size:11.1px">For Help, press F1</div>
<div class="a" style="left:953px;top:967px;width:327px;height:16px;border-left:1px solid #808080;border-top:1px solid #808080"></div>
<div class="a" style="left:956px;top:969.5px;white-space:nowrap;font-size:11.3px">Page: 14 - SP 500 for blog</div>
</body></html>
